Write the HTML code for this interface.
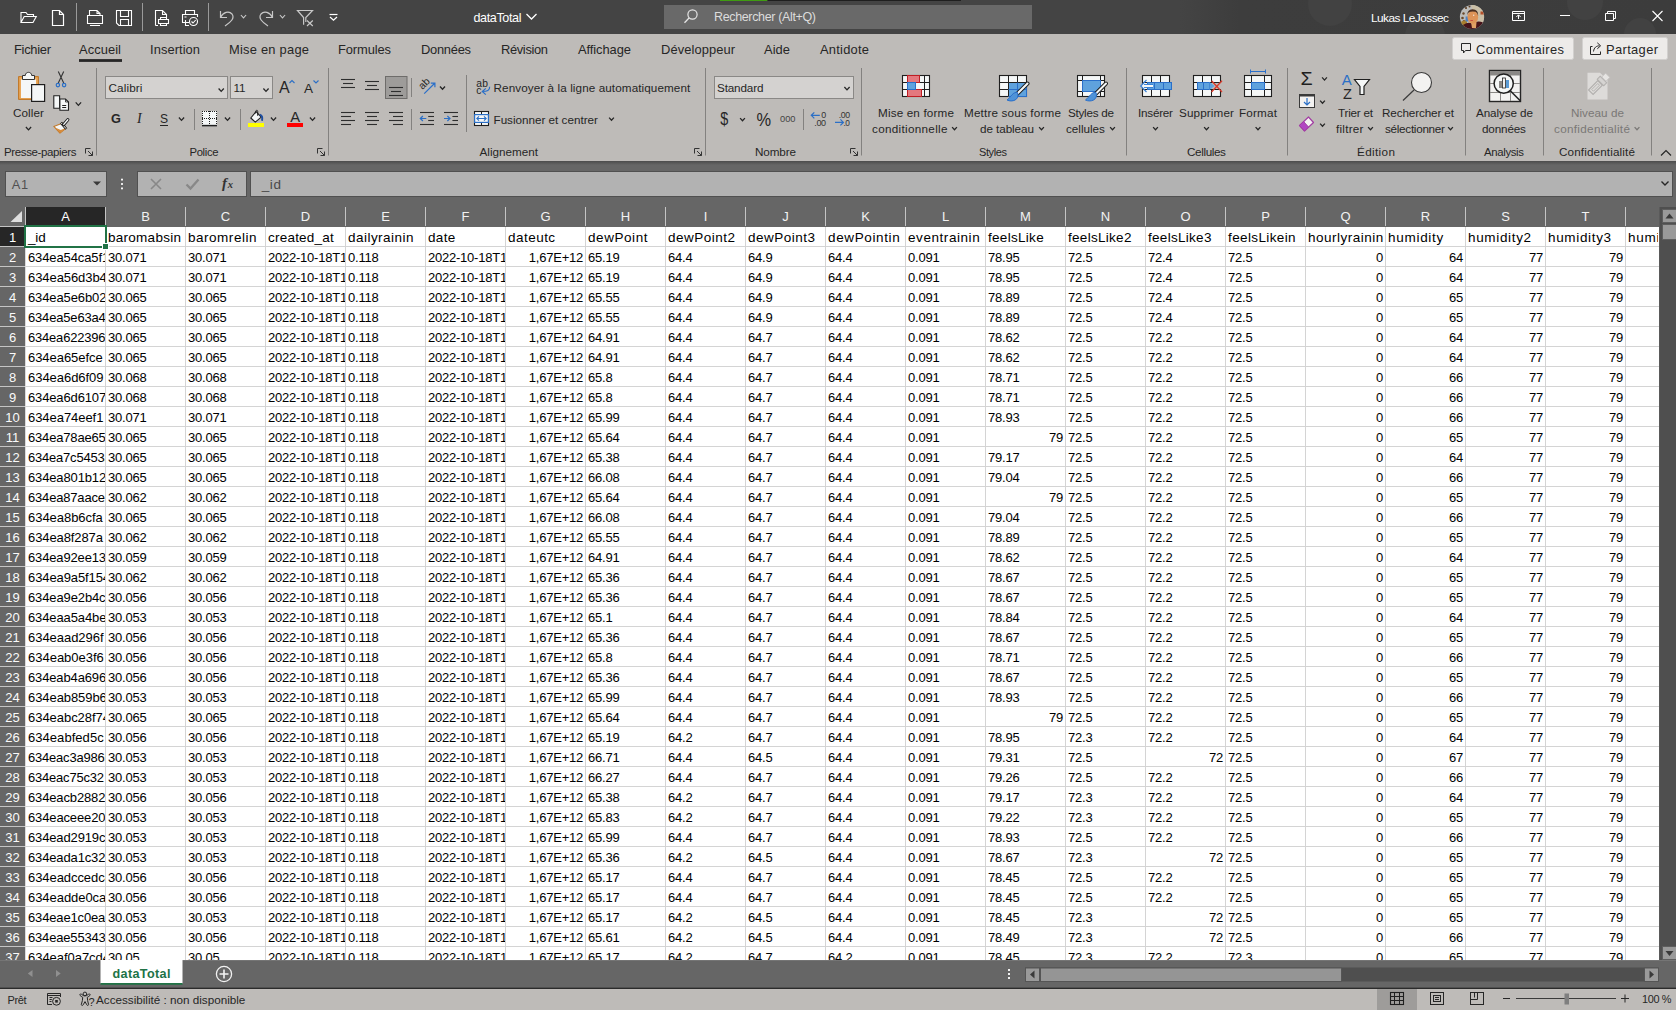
<!DOCTYPE html>
<html lang="fr"><head><meta charset="utf-8"><title>dataTotal - Excel</title>
<style>
*{box-sizing:border-box;margin:0;padding:0}
html,body{width:1676px;height:1010px;overflow:hidden;background:#666666}
body{font-family:"Liberation Sans", sans-serif;position:relative}
#app{position:absolute;left:0;top:0;width:1676px;height:1010px;overflow:hidden;background:#666666}
#sheet{position:absolute;left:0;top:207px;width:1659px;height:753px;overflow:hidden;background:#666666}
#cells{position:absolute;left:26px;top:20px;width:1633px;height:733px;background-color:#fff;
 background-image:linear-gradient(to right,transparent 79px,#d4d4d4 79px),linear-gradient(to bottom,transparent 19px,#d4d4d4 19px);
 background-size:80px 20px,80px 20px;}
#g{position:absolute;left:0;top:-207px;width:1676px;height:1010px}
.c{position:absolute;height:19px;line-height:19px;font-size:13px;letter-spacing:-0.23px;color:#000;white-space:nowrap;overflow:hidden;padding:1px 2px 0 2px;background:#fff}
.c.n{text-align:right;padding-right:2px}
.c.h{font-size:13.5px}
.c.i{letter-spacing:0.1px}
.ch{position:absolute;top:207px;height:19px;line-height:20px;font-size:13px;color:#f2f2f2;text-align:center;background:#666666}
.ch.sel{background:#262626;color:#fff}
.chs{position:absolute;top:207px;width:1px;height:19px;background:#c4c4c4}
.rh{position:absolute;left:0;width:25px;height:19px;line-height:22px;font-size:13px;color:#fafafa;text-align:center;background:#666666;border-bottom:0}
.rh::after{content:"";position:absolute;left:0;top:19px;width:25px;height:1px;background:#c4c4c4}
.rh.sel{background:#262626;color:#fff}
#vl{position:absolute;left:25px;top:227px;width:1px;height:733px;background:#dcdcdc}
#selbox{position:absolute;left:24px;top:225px;width:83px;height:23px;border:2px solid #217346}
#selh{position:absolute;left:102px;top:243px;width:5px;height:5px;background:#217346;border:1px solid #fff;box-sizing:content-box}
svg#ui{position:absolute;left:0;top:0;width:1676px;height:1010px;font-family:"Liberation Sans", sans-serif}
</style></head><body><div id="app">
<div id="sheet"><div id="cells"></div><div id="g">
<div class="ch sel" style="left:26px;width:79px">A</div>
<div class="chs" style="left:105px"></div>
<div class="ch" style="left:106px;width:79px">B</div>
<div class="chs" style="left:185px"></div>
<div class="ch" style="left:186px;width:79px">C</div>
<div class="chs" style="left:265px"></div>
<div class="ch" style="left:266px;width:79px">D</div>
<div class="chs" style="left:345px"></div>
<div class="ch" style="left:346px;width:79px">E</div>
<div class="chs" style="left:425px"></div>
<div class="ch" style="left:426px;width:79px">F</div>
<div class="chs" style="left:505px"></div>
<div class="ch" style="left:506px;width:79px">G</div>
<div class="chs" style="left:585px"></div>
<div class="ch" style="left:586px;width:79px">H</div>
<div class="chs" style="left:665px"></div>
<div class="ch" style="left:666px;width:79px">I</div>
<div class="chs" style="left:745px"></div>
<div class="ch" style="left:746px;width:79px">J</div>
<div class="chs" style="left:825px"></div>
<div class="ch" style="left:826px;width:79px">K</div>
<div class="chs" style="left:905px"></div>
<div class="ch" style="left:906px;width:79px">L</div>
<div class="chs" style="left:985px"></div>
<div class="ch" style="left:986px;width:79px">M</div>
<div class="chs" style="left:1065px"></div>
<div class="ch" style="left:1066px;width:79px">N</div>
<div class="chs" style="left:1145px"></div>
<div class="ch" style="left:1146px;width:79px">O</div>
<div class="chs" style="left:1225px"></div>
<div class="ch" style="left:1226px;width:79px">P</div>
<div class="chs" style="left:1305px"></div>
<div class="ch" style="left:1306px;width:79px">Q</div>
<div class="chs" style="left:1385px"></div>
<div class="ch" style="left:1386px;width:79px">R</div>
<div class="chs" style="left:1465px"></div>
<div class="ch" style="left:1466px;width:79px">S</div>
<div class="chs" style="left:1545px"></div>
<div class="ch" style="left:1546px;width:79px">T</div>
<div class="chs" style="left:1625px"></div>
<div class="ch" style="left:1626px;width:32px"></div>
<div class="chs" style="left:25px"></div>
<div class="rh sel" style="top:227px">1</div>
<div class="c h" style="left:26px;top:227px;width:79px;letter-spacing:-0.17px">_id</div>
<div class="c h" style="left:106px;top:227px;width:79px;letter-spacing:0.27px">baromabsin</div>
<div class="c h" style="left:186px;top:227px;width:79px;letter-spacing:0.52px">baromrelin</div>
<div class="c h" style="left:266px;top:227px;width:79px;letter-spacing:0.22px">created_at</div>
<div class="c h" style="left:346px;top:227px;width:79px;letter-spacing:0.47px">dailyrainin</div>
<div class="c h" style="left:426px;top:227px;width:79px;letter-spacing:0.31px">date</div>
<div class="c h" style="left:506px;top:227px;width:79px;letter-spacing:0.47px">dateutc</div>
<div class="c h" style="left:586px;top:227px;width:79px;letter-spacing:0.56px">dewPoint</div>
<div class="c h" style="left:666px;top:227px;width:79px;letter-spacing:0.51px">dewPoint2</div>
<div class="c h" style="left:746px;top:227px;width:79px;letter-spacing:0.51px">dewPoint3</div>
<div class="c h" style="left:826px;top:227px;width:79px;letter-spacing:0.63px">dewPointin</div>
<div class="c h" style="left:906px;top:227px;width:79px;letter-spacing:0.56px">eventrainin</div>
<div class="c h" style="left:986px;top:227px;width:79px;letter-spacing:0.30px">feelsLike</div>
<div class="c h" style="left:1066px;top:227px;width:79px;letter-spacing:0.29px">feelsLike2</div>
<div class="c h" style="left:1146px;top:227px;width:79px;letter-spacing:0.29px">feelsLike3</div>
<div class="c h" style="left:1226px;top:227px;width:79px;letter-spacing:0.38px">feelsLikein</div>
<div class="c h" style="left:1306px;top:227px;width:79px;letter-spacing:0.49px">hourlyrainin</div>
<div class="c h" style="left:1386px;top:227px;width:79px;letter-spacing:0.72px">humidity</div>
<div class="c h" style="left:1466px;top:227px;width:79px;letter-spacing:0.66px">humidity2</div>
<div class="c h" style="left:1546px;top:227px;width:79px;letter-spacing:0.66px">humidity3</div>
<div class="c h" style="left:1626px;top:227px;width:32px;letter-spacing:0.72px">humidityin</div>
<div class="rh" style="top:247px">2</div>
<div class="c i" style="left:26px;top:247px;width:79px;letter-spacing:-0.11px">634ea54ca5f1c</div>
<div class="c" style="left:106px;top:247px;width:79px">30.071</div>
<div class="c" style="left:186px;top:247px;width:79px">30.071</div>
<div class="c" style="left:266px;top:247px;width:79px">2022-10-18T12</div>
<div class="c" style="left:346px;top:247px;width:79px">0.118</div>
<div class="c" style="left:426px;top:247px;width:79px">2022-10-18T12</div>
<div class="c n" style="left:506px;top:247px;width:79px">1,67E+12</div>
<div class="c" style="left:586px;top:247px;width:79px">65.19</div>
<div class="c" style="left:666px;top:247px;width:79px">64.4</div>
<div class="c" style="left:746px;top:247px;width:79px">64.9</div>
<div class="c" style="left:826px;top:247px;width:79px">64.4</div>
<div class="c" style="left:906px;top:247px;width:79px">0.091</div>
<div class="c" style="left:986px;top:247px;width:79px">78.95</div>
<div class="c" style="left:1066px;top:247px;width:79px">72.5</div>
<div class="c" style="left:1146px;top:247px;width:79px">72.4</div>
<div class="c" style="left:1226px;top:247px;width:79px">72.5</div>
<div class="c n" style="left:1306px;top:247px;width:79px">0</div>
<div class="c n" style="left:1386px;top:247px;width:79px">64</div>
<div class="c n" style="left:1466px;top:247px;width:79px">77</div>
<div class="c n" style="left:1546px;top:247px;width:79px">79</div>
<div class="rh" style="top:267px">3</div>
<div class="c i" style="left:26px;top:267px;width:79px;letter-spacing:-0.07px">634ea56d3b4e</div>
<div class="c" style="left:106px;top:267px;width:79px">30.071</div>
<div class="c" style="left:186px;top:267px;width:79px">30.071</div>
<div class="c" style="left:266px;top:267px;width:79px">2022-10-18T12</div>
<div class="c" style="left:346px;top:267px;width:79px">0.118</div>
<div class="c" style="left:426px;top:267px;width:79px">2022-10-18T12</div>
<div class="c n" style="left:506px;top:267px;width:79px">1,67E+12</div>
<div class="c" style="left:586px;top:267px;width:79px">65.19</div>
<div class="c" style="left:666px;top:267px;width:79px">64.4</div>
<div class="c" style="left:746px;top:267px;width:79px">64.9</div>
<div class="c" style="left:826px;top:267px;width:79px">64.4</div>
<div class="c" style="left:906px;top:267px;width:79px">0.091</div>
<div class="c" style="left:986px;top:267px;width:79px">78.95</div>
<div class="c" style="left:1066px;top:267px;width:79px">72.5</div>
<div class="c" style="left:1146px;top:267px;width:79px">72.4</div>
<div class="c" style="left:1226px;top:267px;width:79px">72.5</div>
<div class="c n" style="left:1306px;top:267px;width:79px">0</div>
<div class="c n" style="left:1386px;top:267px;width:79px">64</div>
<div class="c n" style="left:1466px;top:267px;width:79px">77</div>
<div class="c n" style="left:1546px;top:267px;width:79px">79</div>
<div class="rh" style="top:287px">4</div>
<div class="c i" style="left:26px;top:287px;width:79px;letter-spacing:-0.11px">634ea5e6b02a</div>
<div class="c" style="left:106px;top:287px;width:79px">30.065</div>
<div class="c" style="left:186px;top:287px;width:79px">30.065</div>
<div class="c" style="left:266px;top:287px;width:79px">2022-10-18T12</div>
<div class="c" style="left:346px;top:287px;width:79px">0.118</div>
<div class="c" style="left:426px;top:287px;width:79px">2022-10-18T12</div>
<div class="c n" style="left:506px;top:287px;width:79px">1,67E+12</div>
<div class="c" style="left:586px;top:287px;width:79px">65.55</div>
<div class="c" style="left:666px;top:287px;width:79px">64.4</div>
<div class="c" style="left:746px;top:287px;width:79px">64.9</div>
<div class="c" style="left:826px;top:287px;width:79px">64.4</div>
<div class="c" style="left:906px;top:287px;width:79px">0.091</div>
<div class="c" style="left:986px;top:287px;width:79px">78.89</div>
<div class="c" style="left:1066px;top:287px;width:79px">72.5</div>
<div class="c" style="left:1146px;top:287px;width:79px">72.4</div>
<div class="c" style="left:1226px;top:287px;width:79px">72.5</div>
<div class="c n" style="left:1306px;top:287px;width:79px">0</div>
<div class="c n" style="left:1386px;top:287px;width:79px">65</div>
<div class="c n" style="left:1466px;top:287px;width:79px">77</div>
<div class="c n" style="left:1546px;top:287px;width:79px">79</div>
<div class="rh" style="top:307px">5</div>
<div class="c i" style="left:26px;top:307px;width:79px;letter-spacing:-0.17px">634ea5e63a4c</div>
<div class="c" style="left:106px;top:307px;width:79px">30.065</div>
<div class="c" style="left:186px;top:307px;width:79px">30.065</div>
<div class="c" style="left:266px;top:307px;width:79px">2022-10-18T12</div>
<div class="c" style="left:346px;top:307px;width:79px">0.118</div>
<div class="c" style="left:426px;top:307px;width:79px">2022-10-18T12</div>
<div class="c n" style="left:506px;top:307px;width:79px">1,67E+12</div>
<div class="c" style="left:586px;top:307px;width:79px">65.55</div>
<div class="c" style="left:666px;top:307px;width:79px">64.4</div>
<div class="c" style="left:746px;top:307px;width:79px">64.9</div>
<div class="c" style="left:826px;top:307px;width:79px">64.4</div>
<div class="c" style="left:906px;top:307px;width:79px">0.091</div>
<div class="c" style="left:986px;top:307px;width:79px">78.89</div>
<div class="c" style="left:1066px;top:307px;width:79px">72.5</div>
<div class="c" style="left:1146px;top:307px;width:79px">72.4</div>
<div class="c" style="left:1226px;top:307px;width:79px">72.5</div>
<div class="c n" style="left:1306px;top:307px;width:79px">0</div>
<div class="c n" style="left:1386px;top:307px;width:79px">65</div>
<div class="c n" style="left:1466px;top:307px;width:79px">77</div>
<div class="c n" style="left:1546px;top:307px;width:79px">79</div>
<div class="rh" style="top:327px">6</div>
<div class="c i" style="left:26px;top:327px;width:79px;letter-spacing:-0.20px">634ea622396d</div>
<div class="c" style="left:106px;top:327px;width:79px">30.065</div>
<div class="c" style="left:186px;top:327px;width:79px">30.065</div>
<div class="c" style="left:266px;top:327px;width:79px">2022-10-18T12</div>
<div class="c" style="left:346px;top:327px;width:79px">0.118</div>
<div class="c" style="left:426px;top:327px;width:79px">2022-10-18T12</div>
<div class="c n" style="left:506px;top:327px;width:79px">1,67E+12</div>
<div class="c" style="left:586px;top:327px;width:79px">64.91</div>
<div class="c" style="left:666px;top:327px;width:79px">64.4</div>
<div class="c" style="left:746px;top:327px;width:79px">64.7</div>
<div class="c" style="left:826px;top:327px;width:79px">64.4</div>
<div class="c" style="left:906px;top:327px;width:79px">0.091</div>
<div class="c" style="left:986px;top:327px;width:79px">78.62</div>
<div class="c" style="left:1066px;top:327px;width:79px">72.5</div>
<div class="c" style="left:1146px;top:327px;width:79px">72.2</div>
<div class="c" style="left:1226px;top:327px;width:79px">72.5</div>
<div class="c n" style="left:1306px;top:327px;width:79px">0</div>
<div class="c n" style="left:1386px;top:327px;width:79px">64</div>
<div class="c n" style="left:1466px;top:327px;width:79px">77</div>
<div class="c n" style="left:1546px;top:327px;width:79px">79</div>
<div class="rh" style="top:347px">7</div>
<div class="c i" style="left:26px;top:347px;width:79px;letter-spacing:-0.05px">634ea65efce</div>
<div class="c" style="left:106px;top:347px;width:79px">30.065</div>
<div class="c" style="left:186px;top:347px;width:79px">30.065</div>
<div class="c" style="left:266px;top:347px;width:79px">2022-10-18T12</div>
<div class="c" style="left:346px;top:347px;width:79px">0.118</div>
<div class="c" style="left:426px;top:347px;width:79px">2022-10-18T12</div>
<div class="c n" style="left:506px;top:347px;width:79px">1,67E+12</div>
<div class="c" style="left:586px;top:347px;width:79px">64.91</div>
<div class="c" style="left:666px;top:347px;width:79px">64.4</div>
<div class="c" style="left:746px;top:347px;width:79px">64.7</div>
<div class="c" style="left:826px;top:347px;width:79px">64.4</div>
<div class="c" style="left:906px;top:347px;width:79px">0.091</div>
<div class="c" style="left:986px;top:347px;width:79px">78.62</div>
<div class="c" style="left:1066px;top:347px;width:79px">72.5</div>
<div class="c" style="left:1146px;top:347px;width:79px">72.2</div>
<div class="c" style="left:1226px;top:347px;width:79px">72.5</div>
<div class="c n" style="left:1306px;top:347px;width:79px">0</div>
<div class="c n" style="left:1386px;top:347px;width:79px">64</div>
<div class="c n" style="left:1466px;top:347px;width:79px">77</div>
<div class="c n" style="left:1546px;top:347px;width:79px">79</div>
<div class="rh" style="top:367px">8</div>
<div class="c i" style="left:26px;top:367px;width:79px;letter-spacing:-0.04px">634ea6d6f09</div>
<div class="c" style="left:106px;top:367px;width:79px">30.068</div>
<div class="c" style="left:186px;top:367px;width:79px">30.068</div>
<div class="c" style="left:266px;top:367px;width:79px">2022-10-18T12</div>
<div class="c" style="left:346px;top:367px;width:79px">0.118</div>
<div class="c" style="left:426px;top:367px;width:79px">2022-10-18T12</div>
<div class="c n" style="left:506px;top:367px;width:79px">1,67E+12</div>
<div class="c" style="left:586px;top:367px;width:79px">65.8</div>
<div class="c" style="left:666px;top:367px;width:79px">64.4</div>
<div class="c" style="left:746px;top:367px;width:79px">64.7</div>
<div class="c" style="left:826px;top:367px;width:79px">64.4</div>
<div class="c" style="left:906px;top:367px;width:79px">0.091</div>
<div class="c" style="left:986px;top:367px;width:79px">78.71</div>
<div class="c" style="left:1066px;top:367px;width:79px">72.5</div>
<div class="c" style="left:1146px;top:367px;width:79px">72.2</div>
<div class="c" style="left:1226px;top:367px;width:79px">72.5</div>
<div class="c n" style="left:1306px;top:367px;width:79px">0</div>
<div class="c n" style="left:1386px;top:367px;width:79px">66</div>
<div class="c n" style="left:1466px;top:367px;width:79px">77</div>
<div class="c n" style="left:1546px;top:367px;width:79px">79</div>
<div class="rh" style="top:387px">9</div>
<div class="c i" style="left:26px;top:387px;width:79px;letter-spacing:-0.14px">634ea6d61077</div>
<div class="c" style="left:106px;top:387px;width:79px">30.068</div>
<div class="c" style="left:186px;top:387px;width:79px">30.068</div>
<div class="c" style="left:266px;top:387px;width:79px">2022-10-18T12</div>
<div class="c" style="left:346px;top:387px;width:79px">0.118</div>
<div class="c" style="left:426px;top:387px;width:79px">2022-10-18T12</div>
<div class="c n" style="left:506px;top:387px;width:79px">1,67E+12</div>
<div class="c" style="left:586px;top:387px;width:79px">65.8</div>
<div class="c" style="left:666px;top:387px;width:79px">64.4</div>
<div class="c" style="left:746px;top:387px;width:79px">64.7</div>
<div class="c" style="left:826px;top:387px;width:79px">64.4</div>
<div class="c" style="left:906px;top:387px;width:79px">0.091</div>
<div class="c" style="left:986px;top:387px;width:79px">78.71</div>
<div class="c" style="left:1066px;top:387px;width:79px">72.5</div>
<div class="c" style="left:1146px;top:387px;width:79px">72.2</div>
<div class="c" style="left:1226px;top:387px;width:79px">72.5</div>
<div class="c n" style="left:1306px;top:387px;width:79px">0</div>
<div class="c n" style="left:1386px;top:387px;width:79px">66</div>
<div class="c n" style="left:1466px;top:387px;width:79px">77</div>
<div class="c n" style="left:1546px;top:387px;width:79px">79</div>
<div class="rh" style="top:407px">10</div>
<div class="c i" style="left:26px;top:407px;width:79px;letter-spacing:-0.05px">634ea74eef1</div>
<div class="c" style="left:106px;top:407px;width:79px">30.071</div>
<div class="c" style="left:186px;top:407px;width:79px">30.071</div>
<div class="c" style="left:266px;top:407px;width:79px">2022-10-18T12</div>
<div class="c" style="left:346px;top:407px;width:79px">0.118</div>
<div class="c" style="left:426px;top:407px;width:79px">2022-10-18T12</div>
<div class="c n" style="left:506px;top:407px;width:79px">1,67E+12</div>
<div class="c" style="left:586px;top:407px;width:79px">65.99</div>
<div class="c" style="left:666px;top:407px;width:79px">64.4</div>
<div class="c" style="left:746px;top:407px;width:79px">64.7</div>
<div class="c" style="left:826px;top:407px;width:79px">64.4</div>
<div class="c" style="left:906px;top:407px;width:79px">0.091</div>
<div class="c" style="left:986px;top:407px;width:79px">78.93</div>
<div class="c" style="left:1066px;top:407px;width:79px">72.5</div>
<div class="c" style="left:1146px;top:407px;width:79px">72.2</div>
<div class="c" style="left:1226px;top:407px;width:79px">72.5</div>
<div class="c n" style="left:1306px;top:407px;width:79px">0</div>
<div class="c n" style="left:1386px;top:407px;width:79px">66</div>
<div class="c n" style="left:1466px;top:407px;width:79px">77</div>
<div class="c n" style="left:1546px;top:407px;width:79px">79</div>
<div class="rh" style="top:427px">11</div>
<div class="c i" style="left:26px;top:427px;width:79px;letter-spacing:-0.17px">634ea78ae655</div>
<div class="c" style="left:106px;top:427px;width:79px">30.065</div>
<div class="c" style="left:186px;top:427px;width:79px">30.065</div>
<div class="c" style="left:266px;top:427px;width:79px">2022-10-18T12</div>
<div class="c" style="left:346px;top:427px;width:79px">0.118</div>
<div class="c" style="left:426px;top:427px;width:79px">2022-10-18T12</div>
<div class="c n" style="left:506px;top:427px;width:79px">1,67E+12</div>
<div class="c" style="left:586px;top:427px;width:79px">65.64</div>
<div class="c" style="left:666px;top:427px;width:79px">64.4</div>
<div class="c" style="left:746px;top:427px;width:79px">64.7</div>
<div class="c" style="left:826px;top:427px;width:79px">64.4</div>
<div class="c" style="left:906px;top:427px;width:79px">0.091</div>
<div class="c n" style="left:986px;top:427px;width:79px">79</div>
<div class="c" style="left:1066px;top:427px;width:79px">72.5</div>
<div class="c" style="left:1146px;top:427px;width:79px">72.2</div>
<div class="c" style="left:1226px;top:427px;width:79px">72.5</div>
<div class="c n" style="left:1306px;top:427px;width:79px">0</div>
<div class="c n" style="left:1386px;top:427px;width:79px">65</div>
<div class="c n" style="left:1466px;top:427px;width:79px">77</div>
<div class="c n" style="left:1546px;top:427px;width:79px">79</div>
<div class="rh" style="top:447px">12</div>
<div class="c i" style="left:26px;top:447px;width:79px;letter-spacing:-0.21px">634ea7c5453a</div>
<div class="c" style="left:106px;top:447px;width:79px">30.065</div>
<div class="c" style="left:186px;top:447px;width:79px">30.065</div>
<div class="c" style="left:266px;top:447px;width:79px">2022-10-18T12</div>
<div class="c" style="left:346px;top:447px;width:79px">0.118</div>
<div class="c" style="left:426px;top:447px;width:79px">2022-10-18T12</div>
<div class="c n" style="left:506px;top:447px;width:79px">1,67E+12</div>
<div class="c" style="left:586px;top:447px;width:79px">65.38</div>
<div class="c" style="left:666px;top:447px;width:79px">64.4</div>
<div class="c" style="left:746px;top:447px;width:79px">64.7</div>
<div class="c" style="left:826px;top:447px;width:79px">64.4</div>
<div class="c" style="left:906px;top:447px;width:79px">0.091</div>
<div class="c" style="left:986px;top:447px;width:79px">79.17</div>
<div class="c" style="left:1066px;top:447px;width:79px">72.5</div>
<div class="c" style="left:1146px;top:447px;width:79px">72.2</div>
<div class="c" style="left:1226px;top:447px;width:79px">72.5</div>
<div class="c n" style="left:1306px;top:447px;width:79px">0</div>
<div class="c n" style="left:1386px;top:447px;width:79px">64</div>
<div class="c n" style="left:1466px;top:447px;width:79px">77</div>
<div class="c n" style="left:1546px;top:447px;width:79px">79</div>
<div class="rh" style="top:467px">13</div>
<div class="c i" style="left:26px;top:467px;width:79px;letter-spacing:-0.14px">634ea801b12c</div>
<div class="c" style="left:106px;top:467px;width:79px">30.065</div>
<div class="c" style="left:186px;top:467px;width:79px">30.065</div>
<div class="c" style="left:266px;top:467px;width:79px">2022-10-18T12</div>
<div class="c" style="left:346px;top:467px;width:79px">0.118</div>
<div class="c" style="left:426px;top:467px;width:79px">2022-10-18T12</div>
<div class="c n" style="left:506px;top:467px;width:79px">1,67E+12</div>
<div class="c" style="left:586px;top:467px;width:79px">66.08</div>
<div class="c" style="left:666px;top:467px;width:79px">64.4</div>
<div class="c" style="left:746px;top:467px;width:79px">64.7</div>
<div class="c" style="left:826px;top:467px;width:79px">64.4</div>
<div class="c" style="left:906px;top:467px;width:79px">0.091</div>
<div class="c" style="left:986px;top:467px;width:79px">79.04</div>
<div class="c" style="left:1066px;top:467px;width:79px">72.5</div>
<div class="c" style="left:1146px;top:467px;width:79px">72.2</div>
<div class="c" style="left:1226px;top:467px;width:79px">72.5</div>
<div class="c n" style="left:1306px;top:467px;width:79px">0</div>
<div class="c n" style="left:1386px;top:467px;width:79px">66</div>
<div class="c n" style="left:1466px;top:467px;width:79px">77</div>
<div class="c n" style="left:1546px;top:467px;width:79px">79</div>
<div class="rh" style="top:487px">14</div>
<div class="c i" style="left:26px;top:487px;width:79px;letter-spacing:-0.18px">634ea87aace2</div>
<div class="c" style="left:106px;top:487px;width:79px">30.062</div>
<div class="c" style="left:186px;top:487px;width:79px">30.062</div>
<div class="c" style="left:266px;top:487px;width:79px">2022-10-18T12</div>
<div class="c" style="left:346px;top:487px;width:79px">0.118</div>
<div class="c" style="left:426px;top:487px;width:79px">2022-10-18T12</div>
<div class="c n" style="left:506px;top:487px;width:79px">1,67E+12</div>
<div class="c" style="left:586px;top:487px;width:79px">65.64</div>
<div class="c" style="left:666px;top:487px;width:79px">64.4</div>
<div class="c" style="left:746px;top:487px;width:79px">64.7</div>
<div class="c" style="left:826px;top:487px;width:79px">64.4</div>
<div class="c" style="left:906px;top:487px;width:79px">0.091</div>
<div class="c n" style="left:986px;top:487px;width:79px">79</div>
<div class="c" style="left:1066px;top:487px;width:79px">72.5</div>
<div class="c" style="left:1146px;top:487px;width:79px">72.2</div>
<div class="c" style="left:1226px;top:487px;width:79px">72.5</div>
<div class="c n" style="left:1306px;top:487px;width:79px">0</div>
<div class="c n" style="left:1386px;top:487px;width:79px">65</div>
<div class="c n" style="left:1466px;top:487px;width:79px">77</div>
<div class="c n" style="left:1546px;top:487px;width:79px">79</div>
<div class="rh" style="top:507px">15</div>
<div class="c i" style="left:26px;top:507px;width:79px;letter-spacing:-0.04px">634ea8b6cfa</div>
<div class="c" style="left:106px;top:507px;width:79px">30.065</div>
<div class="c" style="left:186px;top:507px;width:79px">30.065</div>
<div class="c" style="left:266px;top:507px;width:79px">2022-10-18T12</div>
<div class="c" style="left:346px;top:507px;width:79px">0.118</div>
<div class="c" style="left:426px;top:507px;width:79px">2022-10-18T12</div>
<div class="c n" style="left:506px;top:507px;width:79px">1,67E+12</div>
<div class="c" style="left:586px;top:507px;width:79px">66.08</div>
<div class="c" style="left:666px;top:507px;width:79px">64.4</div>
<div class="c" style="left:746px;top:507px;width:79px">64.7</div>
<div class="c" style="left:826px;top:507px;width:79px">64.4</div>
<div class="c" style="left:906px;top:507px;width:79px">0.091</div>
<div class="c" style="left:986px;top:507px;width:79px">79.04</div>
<div class="c" style="left:1066px;top:507px;width:79px">72.5</div>
<div class="c" style="left:1146px;top:507px;width:79px">72.2</div>
<div class="c" style="left:1226px;top:507px;width:79px">72.5</div>
<div class="c n" style="left:1306px;top:507px;width:79px">0</div>
<div class="c n" style="left:1386px;top:507px;width:79px">66</div>
<div class="c n" style="left:1466px;top:507px;width:79px">77</div>
<div class="c n" style="left:1546px;top:507px;width:79px">79</div>
<div class="rh" style="top:527px">16</div>
<div class="c i" style="left:26px;top:527px;width:79px;letter-spacing:-0.10px">634ea8f287a</div>
<div class="c" style="left:106px;top:527px;width:79px">30.062</div>
<div class="c" style="left:186px;top:527px;width:79px">30.062</div>
<div class="c" style="left:266px;top:527px;width:79px">2022-10-18T12</div>
<div class="c" style="left:346px;top:527px;width:79px">0.118</div>
<div class="c" style="left:426px;top:527px;width:79px">2022-10-18T12</div>
<div class="c n" style="left:506px;top:527px;width:79px">1,67E+12</div>
<div class="c" style="left:586px;top:527px;width:79px">65.55</div>
<div class="c" style="left:666px;top:527px;width:79px">64.4</div>
<div class="c" style="left:746px;top:527px;width:79px">64.7</div>
<div class="c" style="left:826px;top:527px;width:79px">64.4</div>
<div class="c" style="left:906px;top:527px;width:79px">0.091</div>
<div class="c" style="left:986px;top:527px;width:79px">78.89</div>
<div class="c" style="left:1066px;top:527px;width:79px">72.5</div>
<div class="c" style="left:1146px;top:527px;width:79px">72.2</div>
<div class="c" style="left:1226px;top:527px;width:79px">72.5</div>
<div class="c n" style="left:1306px;top:527px;width:79px">0</div>
<div class="c n" style="left:1386px;top:527px;width:79px">65</div>
<div class="c n" style="left:1466px;top:527px;width:79px">77</div>
<div class="c n" style="left:1546px;top:527px;width:79px">79</div>
<div class="rh" style="top:547px">17</div>
<div class="c i" style="left:26px;top:547px;width:79px;letter-spacing:-0.15px">634ea92ee131</div>
<div class="c" style="left:106px;top:547px;width:79px">30.059</div>
<div class="c" style="left:186px;top:547px;width:79px">30.059</div>
<div class="c" style="left:266px;top:547px;width:79px">2022-10-18T12</div>
<div class="c" style="left:346px;top:547px;width:79px">0.118</div>
<div class="c" style="left:426px;top:547px;width:79px">2022-10-18T12</div>
<div class="c n" style="left:506px;top:547px;width:79px">1,67E+12</div>
<div class="c" style="left:586px;top:547px;width:79px">64.91</div>
<div class="c" style="left:666px;top:547px;width:79px">64.4</div>
<div class="c" style="left:746px;top:547px;width:79px">64.7</div>
<div class="c" style="left:826px;top:547px;width:79px">64.4</div>
<div class="c" style="left:906px;top:547px;width:79px">0.091</div>
<div class="c" style="left:986px;top:547px;width:79px">78.62</div>
<div class="c" style="left:1066px;top:547px;width:79px">72.5</div>
<div class="c" style="left:1146px;top:547px;width:79px">72.2</div>
<div class="c" style="left:1226px;top:547px;width:79px">72.5</div>
<div class="c n" style="left:1306px;top:547px;width:79px">0</div>
<div class="c n" style="left:1386px;top:547px;width:79px">64</div>
<div class="c n" style="left:1466px;top:547px;width:79px">77</div>
<div class="c n" style="left:1546px;top:547px;width:79px">79</div>
<div class="rh" style="top:567px">18</div>
<div class="c i" style="left:26px;top:567px;width:79px;letter-spacing:-0.10px">634ea9a5f154</div>
<div class="c" style="left:106px;top:567px;width:79px">30.062</div>
<div class="c" style="left:186px;top:567px;width:79px">30.062</div>
<div class="c" style="left:266px;top:567px;width:79px">2022-10-18T12</div>
<div class="c" style="left:346px;top:567px;width:79px">0.118</div>
<div class="c" style="left:426px;top:567px;width:79px">2022-10-18T12</div>
<div class="c n" style="left:506px;top:567px;width:79px">1,67E+12</div>
<div class="c" style="left:586px;top:567px;width:79px">65.36</div>
<div class="c" style="left:666px;top:567px;width:79px">64.4</div>
<div class="c" style="left:746px;top:567px;width:79px">64.7</div>
<div class="c" style="left:826px;top:567px;width:79px">64.4</div>
<div class="c" style="left:906px;top:567px;width:79px">0.091</div>
<div class="c" style="left:986px;top:567px;width:79px">78.67</div>
<div class="c" style="left:1066px;top:567px;width:79px">72.5</div>
<div class="c" style="left:1146px;top:567px;width:79px">72.2</div>
<div class="c" style="left:1226px;top:567px;width:79px">72.5</div>
<div class="c n" style="left:1306px;top:567px;width:79px">0</div>
<div class="c n" style="left:1386px;top:567px;width:79px">65</div>
<div class="c n" style="left:1466px;top:567px;width:79px">77</div>
<div class="c n" style="left:1546px;top:567px;width:79px">79</div>
<div class="rh" style="top:587px">19</div>
<div class="c i" style="left:26px;top:587px;width:79px;letter-spacing:-0.12px">634ea9e2b4c8</div>
<div class="c" style="left:106px;top:587px;width:79px">30.056</div>
<div class="c" style="left:186px;top:587px;width:79px">30.056</div>
<div class="c" style="left:266px;top:587px;width:79px">2022-10-18T12</div>
<div class="c" style="left:346px;top:587px;width:79px">0.118</div>
<div class="c" style="left:426px;top:587px;width:79px">2022-10-18T12</div>
<div class="c n" style="left:506px;top:587px;width:79px">1,67E+12</div>
<div class="c" style="left:586px;top:587px;width:79px">65.36</div>
<div class="c" style="left:666px;top:587px;width:79px">64.4</div>
<div class="c" style="left:746px;top:587px;width:79px">64.7</div>
<div class="c" style="left:826px;top:587px;width:79px">64.4</div>
<div class="c" style="left:906px;top:587px;width:79px">0.091</div>
<div class="c" style="left:986px;top:587px;width:79px">78.67</div>
<div class="c" style="left:1066px;top:587px;width:79px">72.5</div>
<div class="c" style="left:1146px;top:587px;width:79px">72.2</div>
<div class="c" style="left:1226px;top:587px;width:79px">72.5</div>
<div class="c n" style="left:1306px;top:587px;width:79px">0</div>
<div class="c n" style="left:1386px;top:587px;width:79px">65</div>
<div class="c n" style="left:1466px;top:587px;width:79px">77</div>
<div class="c n" style="left:1546px;top:587px;width:79px">79</div>
<div class="rh" style="top:607px">20</div>
<div class="c i" style="left:26px;top:607px;width:79px;letter-spacing:-0.11px">634eaa5a4be0</div>
<div class="c" style="left:106px;top:607px;width:79px">30.053</div>
<div class="c" style="left:186px;top:607px;width:79px">30.053</div>
<div class="c" style="left:266px;top:607px;width:79px">2022-10-18T12</div>
<div class="c" style="left:346px;top:607px;width:79px">0.118</div>
<div class="c" style="left:426px;top:607px;width:79px">2022-10-18T12</div>
<div class="c n" style="left:506px;top:607px;width:79px">1,67E+12</div>
<div class="c" style="left:586px;top:607px;width:79px">65.1</div>
<div class="c" style="left:666px;top:607px;width:79px">64.4</div>
<div class="c" style="left:746px;top:607px;width:79px">64.7</div>
<div class="c" style="left:826px;top:607px;width:79px">64.4</div>
<div class="c" style="left:906px;top:607px;width:79px">0.091</div>
<div class="c" style="left:986px;top:607px;width:79px">78.84</div>
<div class="c" style="left:1066px;top:607px;width:79px">72.5</div>
<div class="c" style="left:1146px;top:607px;width:79px">72.2</div>
<div class="c" style="left:1226px;top:607px;width:79px">72.5</div>
<div class="c n" style="left:1306px;top:607px;width:79px">0</div>
<div class="c n" style="left:1386px;top:607px;width:79px">64</div>
<div class="c n" style="left:1466px;top:607px;width:79px">77</div>
<div class="c n" style="left:1546px;top:607px;width:79px">79</div>
<div class="rh" style="top:627px">21</div>
<div class="c i" style="left:26px;top:627px;width:79px;letter-spacing:-0.04px">634eaad296f</div>
<div class="c" style="left:106px;top:627px;width:79px">30.056</div>
<div class="c" style="left:186px;top:627px;width:79px">30.056</div>
<div class="c" style="left:266px;top:627px;width:79px">2022-10-18T12</div>
<div class="c" style="left:346px;top:627px;width:79px">0.118</div>
<div class="c" style="left:426px;top:627px;width:79px">2022-10-18T12</div>
<div class="c n" style="left:506px;top:627px;width:79px">1,67E+12</div>
<div class="c" style="left:586px;top:627px;width:79px">65.36</div>
<div class="c" style="left:666px;top:627px;width:79px">64.4</div>
<div class="c" style="left:746px;top:627px;width:79px">64.7</div>
<div class="c" style="left:826px;top:627px;width:79px">64.4</div>
<div class="c" style="left:906px;top:627px;width:79px">0.091</div>
<div class="c" style="left:986px;top:627px;width:79px">78.67</div>
<div class="c" style="left:1066px;top:627px;width:79px">72.5</div>
<div class="c" style="left:1146px;top:627px;width:79px">72.2</div>
<div class="c" style="left:1226px;top:627px;width:79px">72.5</div>
<div class="c n" style="left:1306px;top:627px;width:79px">0</div>
<div class="c n" style="left:1386px;top:627px;width:79px">65</div>
<div class="c n" style="left:1466px;top:627px;width:79px">77</div>
<div class="c n" style="left:1546px;top:627px;width:79px">79</div>
<div class="rh" style="top:647px">22</div>
<div class="c i" style="left:26px;top:647px;width:79px;letter-spacing:-0.01px">634eab0e3f6</div>
<div class="c" style="left:106px;top:647px;width:79px">30.056</div>
<div class="c" style="left:186px;top:647px;width:79px">30.056</div>
<div class="c" style="left:266px;top:647px;width:79px">2022-10-18T12</div>
<div class="c" style="left:346px;top:647px;width:79px">0.118</div>
<div class="c" style="left:426px;top:647px;width:79px">2022-10-18T12</div>
<div class="c n" style="left:506px;top:647px;width:79px">1,67E+12</div>
<div class="c" style="left:586px;top:647px;width:79px">65.8</div>
<div class="c" style="left:666px;top:647px;width:79px">64.4</div>
<div class="c" style="left:746px;top:647px;width:79px">64.7</div>
<div class="c" style="left:826px;top:647px;width:79px">64.4</div>
<div class="c" style="left:906px;top:647px;width:79px">0.091</div>
<div class="c" style="left:986px;top:647px;width:79px">78.71</div>
<div class="c" style="left:1066px;top:647px;width:79px">72.5</div>
<div class="c" style="left:1146px;top:647px;width:79px">72.2</div>
<div class="c" style="left:1226px;top:647px;width:79px">72.5</div>
<div class="c n" style="left:1306px;top:647px;width:79px">0</div>
<div class="c n" style="left:1386px;top:647px;width:79px">66</div>
<div class="c n" style="left:1466px;top:647px;width:79px">77</div>
<div class="c n" style="left:1546px;top:647px;width:79px">79</div>
<div class="rh" style="top:667px">23</div>
<div class="c i" style="left:26px;top:667px;width:79px;letter-spacing:-0.14px">634eab4a6966</div>
<div class="c" style="left:106px;top:667px;width:79px">30.056</div>
<div class="c" style="left:186px;top:667px;width:79px">30.056</div>
<div class="c" style="left:266px;top:667px;width:79px">2022-10-18T12</div>
<div class="c" style="left:346px;top:667px;width:79px">0.118</div>
<div class="c" style="left:426px;top:667px;width:79px">2022-10-18T12</div>
<div class="c n" style="left:506px;top:667px;width:79px">1,67E+12</div>
<div class="c" style="left:586px;top:667px;width:79px">65.36</div>
<div class="c" style="left:666px;top:667px;width:79px">64.4</div>
<div class="c" style="left:746px;top:667px;width:79px">64.7</div>
<div class="c" style="left:826px;top:667px;width:79px">64.4</div>
<div class="c" style="left:906px;top:667px;width:79px">0.091</div>
<div class="c" style="left:986px;top:667px;width:79px">78.67</div>
<div class="c" style="left:1066px;top:667px;width:79px">72.5</div>
<div class="c" style="left:1146px;top:667px;width:79px">72.2</div>
<div class="c" style="left:1226px;top:667px;width:79px">72.5</div>
<div class="c n" style="left:1306px;top:667px;width:79px">0</div>
<div class="c n" style="left:1386px;top:667px;width:79px">65</div>
<div class="c n" style="left:1466px;top:667px;width:79px">77</div>
<div class="c n" style="left:1546px;top:667px;width:79px">79</div>
<div class="rh" style="top:687px">24</div>
<div class="c i" style="left:26px;top:687px;width:79px;letter-spacing:-0.07px">634eab859b69</div>
<div class="c" style="left:106px;top:687px;width:79px">30.053</div>
<div class="c" style="left:186px;top:687px;width:79px">30.053</div>
<div class="c" style="left:266px;top:687px;width:79px">2022-10-18T12</div>
<div class="c" style="left:346px;top:687px;width:79px">0.118</div>
<div class="c" style="left:426px;top:687px;width:79px">2022-10-18T12</div>
<div class="c n" style="left:506px;top:687px;width:79px">1,67E+12</div>
<div class="c" style="left:586px;top:687px;width:79px">65.99</div>
<div class="c" style="left:666px;top:687px;width:79px">64.4</div>
<div class="c" style="left:746px;top:687px;width:79px">64.7</div>
<div class="c" style="left:826px;top:687px;width:79px">64.4</div>
<div class="c" style="left:906px;top:687px;width:79px">0.091</div>
<div class="c" style="left:986px;top:687px;width:79px">78.93</div>
<div class="c" style="left:1066px;top:687px;width:79px">72.5</div>
<div class="c" style="left:1146px;top:687px;width:79px">72.2</div>
<div class="c" style="left:1226px;top:687px;width:79px">72.5</div>
<div class="c n" style="left:1306px;top:687px;width:79px">0</div>
<div class="c n" style="left:1386px;top:687px;width:79px">66</div>
<div class="c n" style="left:1466px;top:687px;width:79px">77</div>
<div class="c n" style="left:1546px;top:687px;width:79px">79</div>
<div class="rh" style="top:707px">25</div>
<div class="c i" style="left:26px;top:707px;width:79px;letter-spacing:-0.04px">634eabc28f74</div>
<div class="c" style="left:106px;top:707px;width:79px">30.065</div>
<div class="c" style="left:186px;top:707px;width:79px">30.065</div>
<div class="c" style="left:266px;top:707px;width:79px">2022-10-18T12</div>
<div class="c" style="left:346px;top:707px;width:79px">0.118</div>
<div class="c" style="left:426px;top:707px;width:79px">2022-10-18T12</div>
<div class="c n" style="left:506px;top:707px;width:79px">1,67E+12</div>
<div class="c" style="left:586px;top:707px;width:79px">65.64</div>
<div class="c" style="left:666px;top:707px;width:79px">64.4</div>
<div class="c" style="left:746px;top:707px;width:79px">64.7</div>
<div class="c" style="left:826px;top:707px;width:79px">64.4</div>
<div class="c" style="left:906px;top:707px;width:79px">0.091</div>
<div class="c n" style="left:986px;top:707px;width:79px">79</div>
<div class="c" style="left:1066px;top:707px;width:79px">72.5</div>
<div class="c" style="left:1146px;top:707px;width:79px">72.2</div>
<div class="c" style="left:1226px;top:707px;width:79px">72.5</div>
<div class="c n" style="left:1306px;top:707px;width:79px">0</div>
<div class="c n" style="left:1386px;top:707px;width:79px">65</div>
<div class="c n" style="left:1466px;top:707px;width:79px">77</div>
<div class="c n" style="left:1546px;top:707px;width:79px">79</div>
<div class="rh" style="top:727px">26</div>
<div class="c i" style="left:26px;top:727px;width:79px;letter-spacing:0.05px">634eabfed5c</div>
<div class="c" style="left:106px;top:727px;width:79px">30.056</div>
<div class="c" style="left:186px;top:727px;width:79px">30.056</div>
<div class="c" style="left:266px;top:727px;width:79px">2022-10-18T12</div>
<div class="c" style="left:346px;top:727px;width:79px">0.118</div>
<div class="c" style="left:426px;top:727px;width:79px">2022-10-18T12</div>
<div class="c n" style="left:506px;top:727px;width:79px">1,67E+12</div>
<div class="c" style="left:586px;top:727px;width:79px">65.19</div>
<div class="c" style="left:666px;top:727px;width:79px">64.2</div>
<div class="c" style="left:746px;top:727px;width:79px">64.7</div>
<div class="c" style="left:826px;top:727px;width:79px">64.4</div>
<div class="c" style="left:906px;top:727px;width:79px">0.091</div>
<div class="c" style="left:986px;top:727px;width:79px">78.95</div>
<div class="c" style="left:1066px;top:727px;width:79px">72.3</div>
<div class="c" style="left:1146px;top:727px;width:79px">72.2</div>
<div class="c" style="left:1226px;top:727px;width:79px">72.5</div>
<div class="c n" style="left:1306px;top:727px;width:79px">0</div>
<div class="c n" style="left:1386px;top:727px;width:79px">64</div>
<div class="c n" style="left:1466px;top:727px;width:79px">77</div>
<div class="c n" style="left:1546px;top:727px;width:79px">79</div>
<div class="rh" style="top:747px">27</div>
<div class="c i" style="left:26px;top:747px;width:79px;letter-spacing:-0.21px">634eac3a9865</div>
<div class="c" style="left:106px;top:747px;width:79px">30.053</div>
<div class="c" style="left:186px;top:747px;width:79px">30.053</div>
<div class="c" style="left:266px;top:747px;width:79px">2022-10-18T12</div>
<div class="c" style="left:346px;top:747px;width:79px">0.118</div>
<div class="c" style="left:426px;top:747px;width:79px">2022-10-18T12</div>
<div class="c n" style="left:506px;top:747px;width:79px">1,67E+12</div>
<div class="c" style="left:586px;top:747px;width:79px">66.71</div>
<div class="c" style="left:666px;top:747px;width:79px">64.4</div>
<div class="c" style="left:746px;top:747px;width:79px">64.5</div>
<div class="c" style="left:826px;top:747px;width:79px">64.4</div>
<div class="c" style="left:906px;top:747px;width:79px">0.091</div>
<div class="c" style="left:986px;top:747px;width:79px">79.31</div>
<div class="c" style="left:1066px;top:747px;width:79px">72.5</div>
<div class="c n" style="left:1146px;top:747px;width:79px">72</div>
<div class="c" style="left:1226px;top:747px;width:79px">72.5</div>
<div class="c n" style="left:1306px;top:747px;width:79px">0</div>
<div class="c n" style="left:1386px;top:747px;width:79px">67</div>
<div class="c n" style="left:1466px;top:747px;width:79px">77</div>
<div class="c n" style="left:1546px;top:747px;width:79px">79</div>
<div class="rh" style="top:767px">28</div>
<div class="c i" style="left:26px;top:767px;width:79px;letter-spacing:-0.21px">634eac75c32</div>
<div class="c" style="left:106px;top:767px;width:79px">30.053</div>
<div class="c" style="left:186px;top:767px;width:79px">30.053</div>
<div class="c" style="left:266px;top:767px;width:79px">2022-10-18T12</div>
<div class="c" style="left:346px;top:767px;width:79px">0.118</div>
<div class="c" style="left:426px;top:767px;width:79px">2022-10-18T12</div>
<div class="c n" style="left:506px;top:767px;width:79px">1,67E+12</div>
<div class="c" style="left:586px;top:767px;width:79px">66.27</div>
<div class="c" style="left:666px;top:767px;width:79px">64.4</div>
<div class="c" style="left:746px;top:767px;width:79px">64.7</div>
<div class="c" style="left:826px;top:767px;width:79px">64.4</div>
<div class="c" style="left:906px;top:767px;width:79px">0.091</div>
<div class="c" style="left:986px;top:767px;width:79px">79.26</div>
<div class="c" style="left:1066px;top:767px;width:79px">72.5</div>
<div class="c" style="left:1146px;top:767px;width:79px">72.2</div>
<div class="c" style="left:1226px;top:767px;width:79px">72.5</div>
<div class="c n" style="left:1306px;top:767px;width:79px">0</div>
<div class="c n" style="left:1386px;top:767px;width:79px">66</div>
<div class="c n" style="left:1466px;top:767px;width:79px">77</div>
<div class="c n" style="left:1546px;top:767px;width:79px">79</div>
<div class="rh" style="top:787px">29</div>
<div class="c i" style="left:26px;top:787px;width:79px;letter-spacing:-0.14px">634eacb28821</div>
<div class="c" style="left:106px;top:787px;width:79px">30.056</div>
<div class="c" style="left:186px;top:787px;width:79px">30.056</div>
<div class="c" style="left:266px;top:787px;width:79px">2022-10-18T12</div>
<div class="c" style="left:346px;top:787px;width:79px">0.118</div>
<div class="c" style="left:426px;top:787px;width:79px">2022-10-18T12</div>
<div class="c n" style="left:506px;top:787px;width:79px">1,67E+12</div>
<div class="c" style="left:586px;top:787px;width:79px">65.38</div>
<div class="c" style="left:666px;top:787px;width:79px">64.2</div>
<div class="c" style="left:746px;top:787px;width:79px">64.7</div>
<div class="c" style="left:826px;top:787px;width:79px">64.4</div>
<div class="c" style="left:906px;top:787px;width:79px">0.091</div>
<div class="c" style="left:986px;top:787px;width:79px">79.17</div>
<div class="c" style="left:1066px;top:787px;width:79px">72.3</div>
<div class="c" style="left:1146px;top:787px;width:79px">72.2</div>
<div class="c" style="left:1226px;top:787px;width:79px">72.5</div>
<div class="c n" style="left:1306px;top:787px;width:79px">0</div>
<div class="c n" style="left:1386px;top:787px;width:79px">64</div>
<div class="c n" style="left:1466px;top:787px;width:79px">77</div>
<div class="c n" style="left:1546px;top:787px;width:79px">79</div>
<div class="rh" style="top:807px">30</div>
<div class="c i" style="left:26px;top:807px;width:79px;letter-spacing:-0.13px">634eaceee20b</div>
<div class="c" style="left:106px;top:807px;width:79px">30.053</div>
<div class="c" style="left:186px;top:807px;width:79px">30.053</div>
<div class="c" style="left:266px;top:807px;width:79px">2022-10-18T12</div>
<div class="c" style="left:346px;top:807px;width:79px">0.118</div>
<div class="c" style="left:426px;top:807px;width:79px">2022-10-18T12</div>
<div class="c n" style="left:506px;top:807px;width:79px">1,67E+12</div>
<div class="c" style="left:586px;top:807px;width:79px">65.83</div>
<div class="c" style="left:666px;top:807px;width:79px">64.2</div>
<div class="c" style="left:746px;top:807px;width:79px">64.7</div>
<div class="c" style="left:826px;top:807px;width:79px">64.4</div>
<div class="c" style="left:906px;top:807px;width:79px">0.091</div>
<div class="c" style="left:986px;top:807px;width:79px">79.22</div>
<div class="c" style="left:1066px;top:807px;width:79px">72.3</div>
<div class="c" style="left:1146px;top:807px;width:79px">72.2</div>
<div class="c" style="left:1226px;top:807px;width:79px">72.5</div>
<div class="c n" style="left:1306px;top:807px;width:79px">0</div>
<div class="c n" style="left:1386px;top:807px;width:79px">65</div>
<div class="c n" style="left:1466px;top:807px;width:79px">77</div>
<div class="c n" style="left:1546px;top:807px;width:79px">79</div>
<div class="rh" style="top:827px">31</div>
<div class="c i" style="left:26px;top:827px;width:79px;letter-spacing:-0.14px">634ead2919c5</div>
<div class="c" style="left:106px;top:827px;width:79px">30.053</div>
<div class="c" style="left:186px;top:827px;width:79px">30.053</div>
<div class="c" style="left:266px;top:827px;width:79px">2022-10-18T12</div>
<div class="c" style="left:346px;top:827px;width:79px">0.118</div>
<div class="c" style="left:426px;top:827px;width:79px">2022-10-18T12</div>
<div class="c n" style="left:506px;top:827px;width:79px">1,67E+12</div>
<div class="c" style="left:586px;top:827px;width:79px">65.99</div>
<div class="c" style="left:666px;top:827px;width:79px">64.4</div>
<div class="c" style="left:746px;top:827px;width:79px">64.7</div>
<div class="c" style="left:826px;top:827px;width:79px">64.4</div>
<div class="c" style="left:906px;top:827px;width:79px">0.091</div>
<div class="c" style="left:986px;top:827px;width:79px">78.93</div>
<div class="c" style="left:1066px;top:827px;width:79px">72.5</div>
<div class="c" style="left:1146px;top:827px;width:79px">72.2</div>
<div class="c" style="left:1226px;top:827px;width:79px">72.5</div>
<div class="c n" style="left:1306px;top:827px;width:79px">0</div>
<div class="c n" style="left:1386px;top:827px;width:79px">66</div>
<div class="c n" style="left:1466px;top:827px;width:79px">77</div>
<div class="c n" style="left:1546px;top:827px;width:79px">79</div>
<div class="rh" style="top:847px">32</div>
<div class="c i" style="left:26px;top:847px;width:79px;letter-spacing:-0.14px">634eada1c328</div>
<div class="c" style="left:106px;top:847px;width:79px">30.053</div>
<div class="c" style="left:186px;top:847px;width:79px">30.053</div>
<div class="c" style="left:266px;top:847px;width:79px">2022-10-18T12</div>
<div class="c" style="left:346px;top:847px;width:79px">0.118</div>
<div class="c" style="left:426px;top:847px;width:79px">2022-10-18T12</div>
<div class="c n" style="left:506px;top:847px;width:79px">1,67E+12</div>
<div class="c" style="left:586px;top:847px;width:79px">65.36</div>
<div class="c" style="left:666px;top:847px;width:79px">64.2</div>
<div class="c" style="left:746px;top:847px;width:79px">64.5</div>
<div class="c" style="left:826px;top:847px;width:79px">64.4</div>
<div class="c" style="left:906px;top:847px;width:79px">0.091</div>
<div class="c" style="left:986px;top:847px;width:79px">78.67</div>
<div class="c" style="left:1066px;top:847px;width:79px">72.3</div>
<div class="c n" style="left:1146px;top:847px;width:79px">72</div>
<div class="c" style="left:1226px;top:847px;width:79px">72.5</div>
<div class="c n" style="left:1306px;top:847px;width:79px">0</div>
<div class="c n" style="left:1386px;top:847px;width:79px">65</div>
<div class="c n" style="left:1466px;top:847px;width:79px">77</div>
<div class="c n" style="left:1546px;top:847px;width:79px">79</div>
<div class="rh" style="top:867px">33</div>
<div class="c i" style="left:26px;top:867px;width:79px;letter-spacing:-0.07px">634eadccedc4</div>
<div class="c" style="left:106px;top:867px;width:79px">30.056</div>
<div class="c" style="left:186px;top:867px;width:79px">30.056</div>
<div class="c" style="left:266px;top:867px;width:79px">2022-10-18T12</div>
<div class="c" style="left:346px;top:867px;width:79px">0.118</div>
<div class="c" style="left:426px;top:867px;width:79px">2022-10-18T12</div>
<div class="c n" style="left:506px;top:867px;width:79px">1,67E+12</div>
<div class="c" style="left:586px;top:867px;width:79px">65.17</div>
<div class="c" style="left:666px;top:867px;width:79px">64.4</div>
<div class="c" style="left:746px;top:867px;width:79px">64.7</div>
<div class="c" style="left:826px;top:867px;width:79px">64.4</div>
<div class="c" style="left:906px;top:867px;width:79px">0.091</div>
<div class="c" style="left:986px;top:867px;width:79px">78.45</div>
<div class="c" style="left:1066px;top:867px;width:79px">72.5</div>
<div class="c" style="left:1146px;top:867px;width:79px">72.2</div>
<div class="c" style="left:1226px;top:867px;width:79px">72.5</div>
<div class="c n" style="left:1306px;top:867px;width:79px">0</div>
<div class="c n" style="left:1386px;top:867px;width:79px">65</div>
<div class="c n" style="left:1466px;top:867px;width:79px">77</div>
<div class="c n" style="left:1546px;top:867px;width:79px">79</div>
<div class="rh" style="top:887px">34</div>
<div class="c i" style="left:26px;top:887px;width:79px;letter-spacing:-0.05px">634eadde0ca7</div>
<div class="c" style="left:106px;top:887px;width:79px">30.056</div>
<div class="c" style="left:186px;top:887px;width:79px">30.056</div>
<div class="c" style="left:266px;top:887px;width:79px">2022-10-18T12</div>
<div class="c" style="left:346px;top:887px;width:79px">0.118</div>
<div class="c" style="left:426px;top:887px;width:79px">2022-10-18T12</div>
<div class="c n" style="left:506px;top:887px;width:79px">1,67E+12</div>
<div class="c" style="left:586px;top:887px;width:79px">65.17</div>
<div class="c" style="left:666px;top:887px;width:79px">64.4</div>
<div class="c" style="left:746px;top:887px;width:79px">64.7</div>
<div class="c" style="left:826px;top:887px;width:79px">64.4</div>
<div class="c" style="left:906px;top:887px;width:79px">0.091</div>
<div class="c" style="left:986px;top:887px;width:79px">78.45</div>
<div class="c" style="left:1066px;top:887px;width:79px">72.5</div>
<div class="c" style="left:1146px;top:887px;width:79px">72.2</div>
<div class="c" style="left:1226px;top:887px;width:79px">72.5</div>
<div class="c n" style="left:1306px;top:887px;width:79px">0</div>
<div class="c n" style="left:1386px;top:887px;width:79px">65</div>
<div class="c n" style="left:1466px;top:887px;width:79px">77</div>
<div class="c n" style="left:1546px;top:887px;width:79px">79</div>
<div class="rh" style="top:907px">35</div>
<div class="c i" style="left:26px;top:907px;width:79px;letter-spacing:-0.15px">634eae1c0ea9</div>
<div class="c" style="left:106px;top:907px;width:79px">30.053</div>
<div class="c" style="left:186px;top:907px;width:79px">30.053</div>
<div class="c" style="left:266px;top:907px;width:79px">2022-10-18T12</div>
<div class="c" style="left:346px;top:907px;width:79px">0.118</div>
<div class="c" style="left:426px;top:907px;width:79px">2022-10-18T12</div>
<div class="c n" style="left:506px;top:907px;width:79px">1,67E+12</div>
<div class="c" style="left:586px;top:907px;width:79px">65.17</div>
<div class="c" style="left:666px;top:907px;width:79px">64.2</div>
<div class="c" style="left:746px;top:907px;width:79px">64.5</div>
<div class="c" style="left:826px;top:907px;width:79px">64.4</div>
<div class="c" style="left:906px;top:907px;width:79px">0.091</div>
<div class="c" style="left:986px;top:907px;width:79px">78.45</div>
<div class="c" style="left:1066px;top:907px;width:79px">72.3</div>
<div class="c n" style="left:1146px;top:907px;width:79px">72</div>
<div class="c" style="left:1226px;top:907px;width:79px">72.5</div>
<div class="c n" style="left:1306px;top:907px;width:79px">0</div>
<div class="c n" style="left:1386px;top:907px;width:79px">65</div>
<div class="c n" style="left:1466px;top:907px;width:79px">77</div>
<div class="c n" style="left:1546px;top:907px;width:79px">79</div>
<div class="rh" style="top:927px">36</div>
<div class="c i" style="left:26px;top:927px;width:79px;letter-spacing:-0.17px">634eae553432</div>
<div class="c" style="left:106px;top:927px;width:79px">30.056</div>
<div class="c" style="left:186px;top:927px;width:79px">30.056</div>
<div class="c" style="left:266px;top:927px;width:79px">2022-10-18T12</div>
<div class="c" style="left:346px;top:927px;width:79px">0.118</div>
<div class="c" style="left:426px;top:927px;width:79px">2022-10-18T12</div>
<div class="c n" style="left:506px;top:927px;width:79px">1,67E+12</div>
<div class="c" style="left:586px;top:927px;width:79px">65.61</div>
<div class="c" style="left:666px;top:927px;width:79px">64.2</div>
<div class="c" style="left:746px;top:927px;width:79px">64.5</div>
<div class="c" style="left:826px;top:927px;width:79px">64.4</div>
<div class="c" style="left:906px;top:927px;width:79px">0.091</div>
<div class="c" style="left:986px;top:927px;width:79px">78.49</div>
<div class="c" style="left:1066px;top:927px;width:79px">72.3</div>
<div class="c n" style="left:1146px;top:927px;width:79px">72</div>
<div class="c" style="left:1226px;top:927px;width:79px">72.5</div>
<div class="c n" style="left:1306px;top:927px;width:79px">0</div>
<div class="c n" style="left:1386px;top:927px;width:79px">66</div>
<div class="c n" style="left:1466px;top:927px;width:79px">77</div>
<div class="c n" style="left:1546px;top:927px;width:79px">79</div>
<div class="rh" style="top:947px">37</div>
<div class="c i" style="left:26px;top:947px;width:79px;letter-spacing:-0.04px">634eaf0a7cd4</div>
<div class="c" style="left:106px;top:947px;width:79px">30.05</div>
<div class="c" style="left:186px;top:947px;width:79px">30.05</div>
<div class="c" style="left:266px;top:947px;width:79px">2022-10-18T12</div>
<div class="c" style="left:346px;top:947px;width:79px">0.118</div>
<div class="c" style="left:426px;top:947px;width:79px">2022-10-18T12</div>
<div class="c n" style="left:506px;top:947px;width:79px">1,67E+12</div>
<div class="c" style="left:586px;top:947px;width:79px">65.17</div>
<div class="c" style="left:666px;top:947px;width:79px">64.2</div>
<div class="c" style="left:746px;top:947px;width:79px">64.7</div>
<div class="c" style="left:826px;top:947px;width:79px">64.2</div>
<div class="c" style="left:906px;top:947px;width:79px">0.091</div>
<div class="c" style="left:986px;top:947px;width:79px">78.45</div>
<div class="c" style="left:1066px;top:947px;width:79px">72.3</div>
<div class="c" style="left:1146px;top:947px;width:79px">72.2</div>
<div class="c" style="left:1226px;top:947px;width:79px">72.3</div>
<div class="c n" style="left:1306px;top:947px;width:79px">0</div>
<div class="c n" style="left:1386px;top:947px;width:79px">65</div>
<div class="c n" style="left:1466px;top:947px;width:79px">77</div>
<div class="c n" style="left:1546px;top:947px;width:79px">79</div>
<div id="vl"></div><div style="position:absolute;left:0;top:226px;width:25px;height:1px;background:#c4c4c4"></div><div id="selbox"></div><div id="selh"></div>
</div></div>
<svg id="ui" width="1676" height="1010" viewBox="0 0 1676 1010">
<rect x="0" y="0" width="1676" height="34" fill="#444444"/>
<linearGradient id="tbg" x1="0" y1="0" x2="1" y2="0"><stop offset="0" stop-color="#444444"/><stop offset="0.12" stop-color="#3d3d3d"/><stop offset="1" stop-color="#3c3c3c"/></linearGradient>
<rect x="1180" y="0" width="496" height="34" fill="url(#tbg)"/>
<g fill="#424242"><circle cx="1330" cy="4" r="22"/><circle cx="1425" cy="36" r="20"/><circle cx="1585" cy="2" r="18"/><circle cx="1640" cy="34" r="16"/></g>
<rect x="0" y="34" width="1676" height="1" fill="#bebbb8"/>
<rect x="720" y="0" width="47.5" height="1" fill="#3f9b12"/>
<rect x="767.5" y="0" width="193.5" height="1" fill="#1f1f1f"/>
<rect x="0" y="34" width="1676" height="127" fill="#bebbb8"/>
<linearGradient id="shd" x1="0" y1="0" x2="0" y2="1"><stop offset="0" stop-color="#4c4c4c"/><stop offset="1" stop-color="#666666"/></linearGradient>
<rect x="0" y="161" width="1676" height="4" fill="url(#shd)"/>
<path d="M21,22.5 V12.5 H26 L27.5,14.5 H33.5 V16.5 M21,22.5 L24.2,16.5 H36.3 L33,22.5 Z" fill="none" stroke="#ffffff" stroke-width="1.1" stroke-linejoin="miter"/>
<path d="M52.5,10.5 H59.5 L63.5,14.5 V25.5 H52.5 Z M59.5,10.5 V14.5 H63.5" fill="none" stroke="#ffffff" stroke-width="1.2"/>
<line x1="76.5" y1="3" x2="76.5" y2="31" stroke="#9a9a9a" stroke-width="1"/>
<path d="M89.5,15 V10.5 H97 L100,13.5 V15 M97,10.5 V13.5 H100 M87.5,15.5 H102.5 V23.5 H87.5 Z M90,25.5 H100" fill="none" stroke="#ffffff" stroke-width="1.1"/>
<path d="M116.5,10.5 H131.5 V25.5 H119 L116.5,23 Z M120.5,10.5 V16.5 H128.5 V10.5 M120.5,25.5 V19.5 H128.5 V25.5" fill="none" stroke="#ffffff" stroke-width="1.1"/>
<line x1="142.5" y1="3" x2="142.5" y2="31" stroke="#9a9a9a" stroke-width="1"/>
<path d="M155.5,25.5 V10.5 H162.5 L166.5,14.5 V17 M162.5,10.5 V14.5 H166.5 M155.5,25.5 H158" fill="none" stroke="#ffffff" stroke-width="1.1"/>
<path d="M160.5,19.5 V17.5 H166.5 V19.5 M158.5,19.5 H168.5 V23.5 H158.5 Z M160.5,23.5 V25.5 H166.5 V23.5" fill="none" stroke="#ffffff" stroke-width="1.1"/>
<path d="M185.5,14.5 V10.5 H194.5 V14.5 M189,22.5 H182.5 V14.5 H197.5 V17 M185.5,20 V25.5 H189 " fill="none" stroke="#ffffff" stroke-width="1.1"/>
<rect x="184.5" y="16.5" width="2" height="1" fill="#ffffff"/>
<circle cx="193.5" cy="21.5" r="4" fill="none" stroke="#ffffff" stroke-width="1.1"/>
<path d="M191.5,21.5 L193,23 L195.7,20" fill="none" stroke="#ffffff" stroke-width="1.1"/>
<line x1="208.5" y1="3" x2="208.5" y2="31" stroke="#9a9a9a" stroke-width="1"/>
<path d="M220.5,11 V17.5 H227 M220.5,17.5 C223,12 229,10.5 232,14 C235,18 231,22 225,26" fill="none" stroke="#c8c8c8" stroke-width="1.2"/>
<path d="M240.9,15.0 L243.5,17.900000000000002 L246.1,15.0" fill="none" stroke="#c8c8c8" stroke-width="1.1" stroke-linecap="butt" stroke-linejoin="miter"/>
<path d="M272.5,11 V17.5 H266 M272.5,17.5 C270,12 264,10.5 261,14 C258,18 262,22 268,26" fill="none" stroke="#c8c8c8" stroke-width="1.2"/>
<path d="M279.9,15.0 L282.5,17.900000000000002 L285.1,15.0" fill="none" stroke="#c8c8c8" stroke-width="1.1" stroke-linecap="butt" stroke-linejoin="miter"/>
<path d="M305.8,22 V17.5 L312.5,10.5 H297.5 L303.6,17.5 V24.8" fill="none" stroke="#c8c8c8" stroke-width="1.2"/>
<path d="M307,20.5 L312.8,26 M312.8,20.5 L307,26" fill="none" stroke="#c8c8c8" stroke-width="1.2"/>
<line x1="329.5" y1="14.5" x2="337.5" y2="14.5" stroke="#ffffff" stroke-width="1.2"/>
<path d="M330,17 L333.5,20.3 L337,17" fill="none" stroke="#ffffff" stroke-width="1.2"/>
<text x="473.50" y="21.50" font-size="12.6" fill="#ffffff" letter-spacing="-0.392">dataTotal</text>
<path d="M526.5,14 L531.5,19 L536.5,14" fill="none" stroke="#ffffff" stroke-width="1.3"/>
<rect x="664" y="5" width="368" height="24" fill="#696969"/>
<circle cx="692.5" cy="14.5" r="4.6" fill="none" stroke="#e6e6e6" stroke-width="1.2"/>
<line x1="689.3" y1="17.8" x2="684.5" y2="22.8" stroke="#e6e6e6" stroke-width="1.3"/>
<text x="714.00" y="21.20" font-size="12.5" fill="#dcdcdc" letter-spacing="-0.354">Rechercher (Alt+Q)</text>
<text x="1371.00" y="21.60" font-size="11.8" fill="#ffffff" letter-spacing="-0.509">Lukas LeJossec</text>
<defs><clipPath id="av"><circle cx="1472" cy="17" r="12.1"/></clipPath></defs>
<g clip-path="url(#av)"><rect x="1459" y="4" width="26" height="26" fill="#bcbcba"/><path d="M1471,4 H1485 V24 H1476 Z" fill="#cbbfa6"/><circle cx="1463.5" cy="13.5" r="1.2" fill="#6b4a2a"/><circle cx="1466" cy="8" r="1.1" fill="#5a3c22"/><circle cx="1462.5" cy="18" r="1.3" fill="#6b4a2a"/><circle cx="1469.5" cy="6.5" r="1" fill="#5a3c22"/><circle cx="1464" cy="21.5" r="1.6" fill="#7a5226"/><rect x="1480.5" y="11.5" width="3.5" height="3" fill="#b5502a"/><path d="M1460,22 L1467,20 L1467,27 L1463,27 Z" fill="#a9802e"/><rect x="1465.6" y="16.5" width="3" height="5" fill="#4f82c4"/><path d="M1459,30 L1463,25 Q1468,21.5 1472,23.5 Q1478,20 1483,22.5 L1485,30 Z" fill="#47141a"/><path d="M1471,22 H1476.5 L1476,28 L1472,28 Z" fill="#e0a165"/><ellipse cx="1472.8" cy="17.2" rx="5.3" ry="6.6" fill="#dd9457"/><path d="M1467.3,15.5 Q1467,9.5 1472.5,9.3 Q1478.5,9.5 1478.2,16 Q1477.5,12.8 1475.5,11.8 Q1471,11 1468.6,12.6 Q1467.6,13.8 1467.3,15.5 Z" fill="#4a3020"/><rect x="1470.3" y="20" width="2.6" height="0.9" fill="#c8483c"/><circle cx="1473.7" cy="15.3" r="0.7" fill="#f4e6da"/></g>
<path d="M1512.5,11.5 H1524.5 V20.5 H1512.5 Z M1512.5,13.5 H1524.5" fill="none" stroke="#ffffff" stroke-width="1"/>
<path d="M1518.5,19 V15 M1516.3,17 L1518.5,14.8 L1520.7,17" fill="none" stroke="#ffffff" stroke-width="1"/>
<line x1="1560" y1="15.5" x2="1570" y2="15.5" stroke="#ffffff" stroke-width="1"/>
<path d="M1605.5,13.5 H1613.5 V20.5 H1605.5 Z M1607.5,13.5 V11.5 H1615.5 V18.5 H1613.5" fill="none" stroke="#ffffff" stroke-width="1" stroke-linejoin="round"/>
<path d="M1652.5,11 L1662.5,21 M1662.5,11 L1652.5,21" fill="none" stroke="#ffffff" stroke-width="1.1"/>
<text x="14.00" y="53.70" font-size="12.9" fill="#262626" letter-spacing="-0.284">Fichier</text>
<text x="79.00" y="53.70" font-size="12.9" fill="#262626" letter-spacing="0.069">Accueil</text>
<text x="150.00" y="53.70" font-size="12.9" fill="#262626" letter-spacing="0.066">Insertion</text>
<text x="229.00" y="53.70" font-size="12.9" fill="#262626" letter-spacing="0.232">Mise en page</text>
<text x="338.00" y="53.70" font-size="12.9" fill="#262626" letter-spacing="-0.108">Formules</text>
<text x="421.00" y="53.70" font-size="12.9" fill="#262626" letter-spacing="-0.272">Données</text>
<text x="501.00" y="53.70" font-size="12.9" fill="#262626" letter-spacing="-0.353">Révision</text>
<text x="578.00" y="53.70" font-size="12.9" fill="#262626" letter-spacing="-0.069">Affichage</text>
<text x="661.00" y="53.70" font-size="12.9" fill="#262626" letter-spacing="0.086">Développeur</text>
<text x="764.00" y="53.70" font-size="12.9" fill="#262626" letter-spacing="0.061">Aide</text>
<text x="820.00" y="53.70" font-size="12.9" fill="#262626" letter-spacing="0.238">Antidote</text>
<rect x="79" y="59.1" width="43" height="2.8" fill="#262626"/>
<rect x="1452.5" y="37.5" width="121" height="22" fill="#edebe9" stroke="#d2d0ce" stroke-width="1" rx="2"/>
<path d="M1461.5,43.5 H1470.5 V50.5 H1465.5 L1463.5,53 V50.5 H1461.5 Z" fill="none" stroke="#262626" stroke-width="1" stroke-linejoin="miter"/>
<text x="1476.00" y="53.60" font-size="12.9" fill="#262626" letter-spacing="0.375">Commentaires</text>
<rect x="1582.5" y="37.5" width="85" height="22" fill="#edebe9" stroke="#d2d0ce" stroke-width="1" rx="2"/>
<path d="M1592.5,46.5 H1590.5 V54.5 H1600.5 V51.5 M1593.5,51.5 C1594,47.5 1596.5,45.8 1599.5,45.8 M1597.3,42.8 L1600.6,45.8 L1597.3,48.8" fill="none" stroke="#262626" stroke-width="1"/>
<text x="1606.00" y="53.60" font-size="12.9" fill="#262626" letter-spacing="0.361">Partager</text>
<rect x="18" y="76" width="21" height="24" fill="#c27a2c" rx="1"/>
<rect x="19.2" y="77.2" width="18.6" height="21.6" fill="#eaa85a"/>
<rect x="21" y="79.5" width="15" height="18.5" fill="#f5f7f7"/>
<path d="M22.5,79.5 V75.5 H25.3 C25.3,71.3 31.7,71.3 31.7,75.5 H34.5 V79.5 Z" fill="#f5f7f7" stroke="#333" stroke-width="1"/>
<rect x="31.6" y="84.6" width="13" height="16.8" fill="#f5f7f7" stroke="#1f1f1f" stroke-width="1.2"/>
<text x="13.00" y="116.60" font-size="11.7" fill="#262626" letter-spacing="0.089">Coller</text>
<path d="M25.9,127.00000000000001 L28.5,129.90000000000003 L31.1,127.00000000000001" fill="none" stroke="#262626" stroke-width="1.3" stroke-linecap="butt" stroke-linejoin="miter"/>
<path d="M58.3,71.5 L63.7,83 M63.7,71.5 L58.3,83" fill="none" stroke="#333" stroke-width="1.1"/>
<circle cx="57.9" cy="85.1" r="1.7" fill="none" stroke="#2b6fc6" stroke-width="1.2"/><circle cx="64.1" cy="85.1" r="1.7" fill="none" stroke="#2b6fc6" stroke-width="1.2"/>
<path d="M53.8,95.7 H59.6 V108.3 H53.8 Z" fill="#f5f7f7" stroke="#1f1f1f" stroke-width="1.1"/>
<path d="M59.9,99 H65.5 L68.5,102 V110.3 H59.9 Z" fill="#f5f7f7" stroke="#1f1f1f" stroke-width="1.1"/>
<path d="M65.5,99 V102 H68.5" fill="none" stroke="#1f1f1f" stroke-width="0.8"/>
<path d="M62.2,105.5 H66.2 M62.2,107.5 H66.2" fill="none" stroke="#1f1f1f" stroke-width="1"/>
<path d="M75.7,102.35000000000001 L78.4,105.35 L81.10000000000001,102.35000000000001" fill="none" stroke="#262626" stroke-width="1.3" stroke-linecap="butt" stroke-linejoin="miter"/>
<path d="M53.8,126.4 L62.2,123.2 L66,128 L60,133.2 Z" fill="#f5f7f7" stroke="#c27a2c" stroke-width="1.1" stroke-linejoin="round"/>
<path d="M55.5,127.8 L60.8,130 L64.3,128.6 L65.6,128.3 L60,133 Z" fill="#d88b3a"/>
<path d="M61,122.6 L66.3,129 " fill="none" stroke="#1f1f1f" stroke-width="2.6"/>
<path d="M61.3,123 L66,128.6 " fill="none" stroke="#f5f7f7" stroke-width="1"/>
<path d="M63.6,124.6 L67.8,119.8" fill="none" stroke="#1f1f1f" stroke-width="3.2" stroke-linecap="round"/>
<path d="M63.8,124.4 L67.8,119.8" fill="none" stroke="#f5f7f7" stroke-width="1.4" stroke-linecap="round"/>
<text x="4.00" y="156.30" font-size="11.5" fill="#262626" letter-spacing="-0.372">Presse-papiers</text>
<path d="M85.5,153.5 V148.5 H90.5 M88,151 L92.5,155.5 M92.5,151.5 V155.5 H88.5" fill="none" stroke="#333" stroke-width="1"/>
<line x1="96.5" y1="68" x2="96.5" y2="155.5" stroke="#83817f" stroke-width="1"/>
<rect x="105.5" y="76.5" width="122" height="22" fill="#d4d2d0" stroke="#8a8886" stroke-width="1"/>
<text x="108.50" y="92.30" font-size="11.7" fill="#262626" letter-spacing="0.141">Calibri</text>
<path d="M218.6,88.5 L221.2,91.39999999999999 L223.79999999999998,88.5" fill="none" stroke="#262626" stroke-width="1.3" stroke-linecap="butt" stroke-linejoin="miter"/>
<rect x="230.5" y="76.5" width="42" height="22" fill="#d4d2d0" stroke="#8a8886" stroke-width="1"/>
<text x="233.50" y="92.30" font-size="11.7" fill="#262626" letter-spacing="-0.144">11</text>
<path d="M263.4,88.5 L266,91.39999999999999 L268.6,88.5" fill="none" stroke="#262626" stroke-width="1.3" stroke-linecap="butt" stroke-linejoin="miter"/>
<text x="279.00" y="92.50" font-size="16" fill="#262626" letter-spacing="0.328">A</text>
<path d="M289.5,83 L292,80.5 L294.5,83" fill="none" stroke="#2b6fc6" stroke-width="1.1"/>
<text x="304.00" y="92.50" font-size="13.5" fill="#262626" letter-spacing="0.495">A</text>
<path d="M313.5,80.5 L316,83 L318.5,80.5" fill="none" stroke="#2b6fc6" stroke-width="1.1"/>
<text x="111.00" y="123.00" font-size="12.7" fill="#262626" font-weight="700" letter-spacing="-0.378">G</text>
<text x="137" y="123" font-size="14" fill="#262626" font-style="italic" font-family="'Liberation Serif',serif">I</text>
<text x="160.00" y="123.00" font-size="12.1" fill="#262626" letter-spacing="-0.571">S</text>
<line x1="160" y1="125.5" x2="168" y2="125.5" stroke="#262626" stroke-width="1"/>
<path d="M178.9,117.5 L181.5,120.39999999999999 L184.1,117.5" fill="none" stroke="#262626" stroke-width="1.3" stroke-linecap="butt" stroke-linejoin="miter"/>
<line x1="194.5" y1="109" x2="194.5" y2="130" stroke="#83817f" stroke-width="1"/>
<rect x="202" y="111" width="15" height="14.5" fill="#f5f7f7"/>
<path d="M202.5,111 V125 M216.5,111 V125 M209.5,111 V125" fill="none" stroke="#1f1f1f" stroke-width="1" stroke-dasharray="1,1"/>
<path d="M202,111.5 H217 M202,118.5 H217" fill="none" stroke="#1f1f1f" stroke-width="1" stroke-dasharray="1,1"/>
<line x1="202" y1="125.6" x2="217" y2="125.6" stroke="#1f1f1f" stroke-width="1.5"/>
<path d="M224.9,117.5 L227.5,120.39999999999999 L230.1,117.5" fill="none" stroke="#262626" stroke-width="1.3" stroke-linecap="butt" stroke-linejoin="miter"/>
<line x1="240.5" y1="109" x2="240.5" y2="130" stroke="#83817f" stroke-width="1"/>
<path d="M250.8,118 L256.1,111.6 L261.2,117.2 L255.3,122.2 Z" fill="#f5f7f7" stroke="#1f1f1f" stroke-width="1.1" stroke-linejoin="round"/>
<path d="M254.8,113.8 L256,110.8 C256.6,109.6 257.8,110.4 257.7,111.4 V115.8" fill="none" stroke="#1f1f1f" stroke-width="1"/>
<path d="M259.8,114.6 C262.2,115.4 262.6,118 262,120.8" fill="none" stroke="#1f4fa0" stroke-width="2"/>
<rect x="248" y="123" width="16" height="4" fill="#ffff00"/>
<path d="M270.9,117.5 L273.5,120.39999999999999 L276.1,117.5" fill="none" stroke="#262626" stroke-width="1.3" stroke-linecap="butt" stroke-linejoin="miter"/>
<text x="290.20" y="122.00" font-size="14.8" fill="#262626">A</text>
<rect x="287" y="123" width="16" height="4" fill="#ff0000"/>
<path d="M309.9,117.5 L312.5,120.39999999999999 L315.1,117.5" fill="none" stroke="#262626" stroke-width="1.3" stroke-linecap="butt" stroke-linejoin="miter"/>
<text x="189.50" y="156.30" font-size="11.3" fill="#262626" letter-spacing="-0.355">Police</text>
<path d="M317.5,153.5 V148.5 H322.5 M320,151 L324.5,155.5 M324.5,151.5 V155.5 H320.5" fill="none" stroke="#333" stroke-width="1"/>
<line x1="328.5" y1="68" x2="328.5" y2="155.5" stroke="#83817f" stroke-width="1"/>
<line x1="341" y1="79.5" x2="355" y2="79.5" stroke="#2e2e2e" stroke-width="1.1"/>
<line x1="341" y1="87.5" x2="355" y2="87.5" stroke="#2e2e2e" stroke-width="1.1"/>
<line x1="343" y1="83.5" x2="353" y2="83.5" stroke="#2e2e2e" stroke-width="1.1"/>
<line x1="365" y1="81.5" x2="379" y2="81.5" stroke="#2e2e2e" stroke-width="1.1"/>
<line x1="365" y1="89.5" x2="379" y2="89.5" stroke="#2e2e2e" stroke-width="1.1"/>
<line x1="367" y1="85.5" x2="377" y2="85.5" stroke="#2e2e2e" stroke-width="1.1"/>
<rect x="385.5" y="76.5" width="21.5" height="22" fill="#9e9c9a" stroke="#6e6c6a" stroke-width="1"/>
<line x1="389" y1="87.5" x2="403" y2="87.5" stroke="#2e2e2e" stroke-width="1.1"/>
<line x1="389" y1="95.5" x2="403" y2="95.5" stroke="#2e2e2e" stroke-width="1.1"/>
<line x1="391" y1="91.5" x2="401" y2="91.5" stroke="#2e2e2e" stroke-width="1.1"/>
<line x1="411.5" y1="78" x2="411.5" y2="97" stroke="#83817f" stroke-width="1"/>
<text transform="translate(422.5,90) rotate(-45)" font-size="10.3" fill="#262626">ab</text>
<path d="M424.2,93.6 L434.7,83.3 M430.8,83.1 H434.9 V87.2" fill="none" stroke="#2a6fc9" stroke-width="1.2"/>
<path d="M440.0,86.45 L442.5,89.25 L445.0,86.45" fill="none" stroke="#262626" stroke-width="1.3" stroke-linecap="butt" stroke-linejoin="miter"/>
<line x1="466.5" y1="75" x2="466.5" y2="132" stroke="#83817f" stroke-width="1"/>
<text x="476.30" y="86.50" font-size="10.3" fill="#262626" letter-spacing="0.344">ab</text>
<text x="476.30" y="93.70" font-size="10.3" fill="#262626">c</text>
<path d="M489.6,86.8 C490,90.5 487,91.5 482.6,91.5 M485.8,88.4 L482.3,91.5 L485.8,94.6" fill="none" stroke="#2a6fc9" stroke-width="1.2"/>
<text x="493.50" y="91.80" font-size="11.7" fill="#262626" letter-spacing="0.094">Renvoyer à la ligne automatiquement</text>
<line x1="341" y1="112.5" x2="355" y2="112.5" stroke="#2e2e2e" stroke-width="1.1"/>
<line x1="341" y1="120.5" x2="355" y2="120.5" stroke="#2e2e2e" stroke-width="1.1"/>
<line x1="341" y1="116.5" x2="351" y2="116.5" stroke="#2e2e2e" stroke-width="1.1"/>
<line x1="341" y1="124.5" x2="351" y2="124.5" stroke="#2e2e2e" stroke-width="1.1"/>
<line x1="365" y1="112.5" x2="379" y2="112.5" stroke="#2e2e2e" stroke-width="1.1"/>
<line x1="365" y1="120.5" x2="379" y2="120.5" stroke="#2e2e2e" stroke-width="1.1"/>
<line x1="367" y1="116.5" x2="377" y2="116.5" stroke="#2e2e2e" stroke-width="1.1"/>
<line x1="367" y1="124.5" x2="377" y2="124.5" stroke="#2e2e2e" stroke-width="1.1"/>
<line x1="389" y1="112.5" x2="403" y2="112.5" stroke="#2e2e2e" stroke-width="1.1"/>
<line x1="389" y1="120.5" x2="403" y2="120.5" stroke="#2e2e2e" stroke-width="1.1"/>
<line x1="393" y1="116.5" x2="403" y2="116.5" stroke="#2e2e2e" stroke-width="1.1"/>
<line x1="393" y1="124.5" x2="403" y2="124.5" stroke="#2e2e2e" stroke-width="1.1"/>
<line x1="411.5" y1="109" x2="411.5" y2="130" stroke="#83817f" stroke-width="1"/>
<line x1="420" y1="112.5" x2="434" y2="112.5" stroke="#2e2e2e" stroke-width="1.1"/>
<line x1="420" y1="124.5" x2="434" y2="124.5" stroke="#2e2e2e" stroke-width="1.1"/>
<line x1="428.2" y1="116.5" x2="434" y2="116.5" stroke="#2e2e2e" stroke-width="1.1"/>
<line x1="428.2" y1="120.5" x2="434" y2="120.5" stroke="#2e2e2e" stroke-width="1.1"/>
<path d="M426.3,118.5 H420.3 M422.9,116 L420.3,118.5 L422.9,121" fill="none" stroke="#2b6fc6" stroke-width="1.2"/>
<line x1="444" y1="112.5" x2="458" y2="112.5" stroke="#2e2e2e" stroke-width="1.1"/>
<line x1="444" y1="124.5" x2="458" y2="124.5" stroke="#2e2e2e" stroke-width="1.1"/>
<line x1="452.4" y1="116.5" x2="458" y2="116.5" stroke="#2e2e2e" stroke-width="1.1"/>
<line x1="452.4" y1="120.5" x2="458" y2="120.5" stroke="#2e2e2e" stroke-width="1.1"/>
<path d="M444,118.5 H450 M447.4,116 L450,118.5 L447.4,121" fill="none" stroke="#2b6fc6" stroke-width="1.2"/>
<rect x="474.5" y="111.5" width="14" height="14" fill="#f5f7f7" stroke="#1f1f1f" stroke-width="1.1"/>
<rect x="474.6" y="114.6" width="13.8" height="7.8" fill="#f5f7f7" stroke="#2b6fc6" stroke-width="1.2"/>
<path d="M481.5,111.5 V114 M481.5,123 V125.5" fill="none" stroke="#1f1f1f" stroke-width="1"/>
<path d="M477,118.5 H486 M479,116.3 L476.8,118.5 L479,120.7 M484,116.3 L486.2,118.5 L484,120.7" fill="none" stroke="#2b6fc6" stroke-width="1.1"/>
<text x="493.50" y="123.60" font-size="11.7" fill="#262626" letter-spacing="-0.010">Fusionner et centrer</text>
<path d="M609.1,117.6 L611.5,120.3 L613.9,117.6" fill="none" stroke="#262626" stroke-width="1.3" stroke-linecap="butt" stroke-linejoin="miter"/>
<text x="479.50" y="156.30" font-size="11.7" fill="#262626" letter-spacing="-0.003">Alignement</text>
<path d="M694.5,153.5 V148.5 H699.5 M697,151 L701.5,155.5 M701.5,151.5 V155.5 H697.5" fill="none" stroke="#333" stroke-width="1"/>
<line x1="705.5" y1="68" x2="705.5" y2="155.5" stroke="#83817f" stroke-width="1"/>
<rect x="714.5" y="76.5" width="139" height="22" fill="#d4d2d0" stroke="#8a8886" stroke-width="1"/>
<text x="717.00" y="92.30" font-size="11.7" fill="#262626" letter-spacing="-0.140">Standard</text>
<path d="M844.4,87.0 L847,89.89999999999999 L849.6,87.0" fill="none" stroke="#262626" stroke-width="1.3" stroke-linecap="butt" stroke-linejoin="miter"/>
<text x="720.30" y="124.60" font-size="17.5" fill="#262626" textLength="8" lengthAdjust="spacingAndGlyphs">$</text>
<path d="M740.1,118.1 L742.5,120.8 L744.9,118.1" fill="none" stroke="#262626" stroke-width="1.3" stroke-linecap="butt" stroke-linejoin="miter"/>
<text x="756.50" y="125.60" font-size="18" fill="#262626" textLength="14.6" lengthAdjust="spacingAndGlyphs">%</text>
<text x="780.00" y="121.90" font-size="9.3" fill="#444" letter-spacing="-0.008">000</text>
<line x1="803.5" y1="109" x2="803.5" y2="130" stroke="#83817f" stroke-width="1"/>
<text x="821.30" y="117.80" font-size="8.9" fill="#333" letter-spacing="-0.349">0</text>
<text x="814.30" y="125.90" font-size="9.0" fill="#333" letter-spacing="-0.355">.00</text>
<path d="M819.8,115.3 H811.3 M814.3,112.3 L811.3,115.3 L814.3,118.3" fill="none" stroke="#2b6fc6" stroke-width="1.2"/>
<text x="838.70" y="117.80" font-size="8.7" fill="#333" letter-spacing="-0.346">.00</text>
<text x="843.40" y="125.90" font-size="8.3" fill="#333" letter-spacing="-0.321">.0</text>
<path d="M835,122.4 H843.4 M840.4,119.4 L843.4,122.4 L840.4,125.4" fill="none" stroke="#2b6fc6" stroke-width="1.2"/>
<text x="755.00" y="156.30" font-size="11.7" fill="#262626" letter-spacing="-0.122">Nombre</text>
<path d="M850.5,153.5 V148.5 H855.5 M853,151 L857.5,155.5 M857.5,151.5 V155.5 H853.5" fill="none" stroke="#333" stroke-width="1"/>
<line x1="861.5" y1="68" x2="861.5" y2="155.5" stroke="#83817f" stroke-width="1"/>
<rect x="902.5" y="75.5" width="27" height="21" fill="#f5f7f7" stroke="#1f1f1f" stroke-width="1.1"/>
<path d="M907.5,75.5 V96.5 M924.5,75.5 V96.5 M902.5,82.5 H929.5 M902.5,89.5 H929.5" fill="none" stroke="#1f1f1f" stroke-width="1"/>
<rect x="907.5" y="75.5" width="12" height="7" fill="#e4787e" stroke="#bf1e24" stroke-width="1"/>
<rect x="907.5" y="89.5" width="14" height="7" fill="#e4787e" stroke="#bf1e24" stroke-width="1"/>
<rect x="907.5" y="82.5" width="8" height="7" fill="#5fa2dd" stroke="#2a6fc9" stroke-width="1"/>
<text x="878.00" y="117.00" font-size="11.7" fill="#262626" letter-spacing="0.157">Mise en forme</text>
<text x="872.00" y="133.00" font-size="11.7" fill="#262626" letter-spacing="0.304">conditionnelle</text>
<path d="M952.1,127.10000000000001 L954.5,129.8 L956.9,127.10000000000001" fill="none" stroke="#262626" stroke-width="1.3" stroke-linecap="butt" stroke-linejoin="miter"/>
<rect x="999.5" y="75.5" width="27" height="21" fill="#f5f7f7" stroke="#1f1f1f" stroke-width="1.1"/>
<rect x="1008.5" y="82.5" width="18.5" height="14.5" fill="#5fa2dd"/>
<path d="M1008.5,75.5 V96.5 M1017.5,75.5 V82.5 M999.5,82.5 H1026.5 M999.5,89.5 H1008.5" fill="none" stroke="#1f1f1f" stroke-width="1"/>
<path d="M1017.5,82.5 V97 M1008.5,89.5 H1027 M1026.5,82.5 V97 M1008.5,96.5 H1027" fill="none" stroke="#2a6fc9" stroke-width="1"/>
<path d="M1027.5,83.5 L1016.5,94.5" fill="none" stroke="#1f1f1f" stroke-width="4" stroke-linecap="round"/>
<path d="M1027.5,83.5 L1016.5,94.5" fill="none" stroke="#f5f7f7" stroke-width="2" stroke-linecap="round"/>
<path d="M1017.5,92.5 C1013,91.5 1011,97 1007,100 C1012,102.5 1020,100 1017.5,92.5 Z" fill="#4f93d8" stroke="#2a6fc9" stroke-width="1"/>
<text x="964.00" y="117.00" font-size="11.7" fill="#262626" letter-spacing="0.170">Mettre sous forme</text>
<text x="980.00" y="133.00" font-size="11.7" fill="#262626" letter-spacing="-0.072">de tableau</text>
<path d="M1039.1,127.10000000000001 L1041.5,129.8 L1043.9,127.10000000000001" fill="none" stroke="#262626" stroke-width="1.3" stroke-linecap="butt" stroke-linejoin="miter"/>
<rect x="1077.5" y="75.5" width="27" height="21" fill="#f5f7f7" stroke="#1f1f1f" stroke-width="1.1"/>
<path d="M1077.5,80.5 H1104.5 M1077.5,91.5 H1104.5 M1082.5,75.5 V96.5 M1100.5,75.5 V96.5" fill="none" stroke="#1f1f1f" stroke-width="1"/>
<rect x="1082.5" y="80.5" width="18" height="11" fill="#5fa2dd" stroke="#2a6fc9" stroke-width="1"/>
<path d="M1106.0,83.5 L1095.0,94.5" fill="none" stroke="#1f1f1f" stroke-width="4" stroke-linecap="round"/>
<path d="M1106.0,83.5 L1095.0,94.5" fill="none" stroke="#f5f7f7" stroke-width="2" stroke-linecap="round"/>
<path d="M1096.0,92.5 C1091.5,91.5 1089.5,97 1085.5,100 C1090.5,102.5 1098.5,100 1096.0,92.5 Z" fill="#4f93d8" stroke="#2a6fc9" stroke-width="1"/>
<text x="1068.00" y="117.00" font-size="11.7" fill="#262626" letter-spacing="-0.265">Styles de</text>
<text x="1066.00" y="133.00" font-size="11.7" fill="#262626" letter-spacing="-0.003">cellules</text>
<path d="M1110.1,127.10000000000001 L1112.5,129.8 L1114.9,127.10000000000001" fill="none" stroke="#262626" stroke-width="1.3" stroke-linecap="butt" stroke-linejoin="miter"/>
<text x="979.00" y="156.30" font-size="11.0" fill="#262626" letter-spacing="-0.391">Styles</text>
<line x1="1126.5" y1="68" x2="1126.5" y2="155.5" stroke="#83817f" stroke-width="1"/>
<rect x="1142.5" y="75.5" width="27" height="21" fill="#f5f7f7" stroke="#1f1f1f" stroke-width="1.1"/>
<line x1="1151.5" y1="75.5" x2="1151.5" y2="96.5" stroke="#1f1f1f" stroke-width="1"/>
<line x1="1160.5" y1="75.5" x2="1160.5" y2="96.5" stroke="#1f1f1f" stroke-width="1"/>
<line x1="1142.5" y1="82.5" x2="1169.5" y2="82.5" stroke="#1f1f1f" stroke-width="1"/>
<line x1="1142.5" y1="89.5" x2="1169.5" y2="89.5" stroke="#1f1f1f" stroke-width="1"/>
<rect x="1147.5" y="82.5" width="24" height="7" fill="#5fa2dd" stroke="#2a6fc9" stroke-width="1"/>
<path d="M1154.5,82.5 V89.5 M1163.5,82.5 V89.5" fill="none" stroke="#2a6fc9" stroke-width="1"/>
<path d="M1153,86 H1141.5" fill="none" stroke="#f5f7f7" stroke-width="3"/>
<path d="M1153,84.5 H1144 M1153,87.5 H1144 M1146.5,80 L1140.7,86 L1146.5,92" fill="none" stroke="#3b82d6" stroke-width="1.2"/>
<text x="1138.00" y="116.80" font-size="11.7" fill="#262626" letter-spacing="-0.235">Insérer</text>
<path d="M1153.1,127.10000000000001 L1155.5,129.8 L1157.9,127.10000000000001" fill="none" stroke="#262626" stroke-width="1.3" stroke-linecap="butt" stroke-linejoin="miter"/>
<rect x="1193.5" y="75.5" width="27" height="21" fill="#f5f7f7" stroke="#1f1f1f" stroke-width="1.1"/>
<line x1="1202.5" y1="75.5" x2="1202.5" y2="96.5" stroke="#1f1f1f" stroke-width="1"/>
<line x1="1211.5" y1="75.5" x2="1211.5" y2="96.5" stroke="#1f1f1f" stroke-width="1"/>
<line x1="1193.5" y1="82.5" x2="1220.5" y2="82.5" stroke="#1f1f1f" stroke-width="1"/>
<line x1="1193.5" y1="89.5" x2="1220.5" y2="89.5" stroke="#1f1f1f" stroke-width="1"/>
<rect x="1211" y="83" width="11" height="6" fill="#bebbb8"/>
<rect x="1197.5" y="82.5" width="12" height="7" fill="#5fa2dd" stroke="#2a6fc9" stroke-width="1"/>
<line x1="1203.5" y1="82.5" x2="1203.5" y2="89.5" stroke="#2a6fc9" stroke-width="1"/>
<path d="M1209.5,82 L1214.5,86 L1209.5,90 Z" fill="#5fa2dd"/>
<path d="M1211.5,80.8 L1222,92 M1222,80.8 L1211.5,92" fill="none" stroke="#d93a2b" stroke-width="1.3"/>
<text x="1179.00" y="116.80" font-size="11.7" fill="#262626" letter-spacing="0.129">Supprimer</text>
<path d="M1204.1,127.10000000000001 L1206.5,129.8 L1208.9,127.10000000000001" fill="none" stroke="#262626" stroke-width="1.3" stroke-linecap="butt" stroke-linejoin="miter"/>
<rect x="1244.5" y="75.5" width="27" height="21" fill="#f5f7f7" stroke="#1f1f1f" stroke-width="1.1"/>
<path d="M1251.5,75.5 V96.5 M1264.5,75.5 V96.5 M1244.5,82.5 H1271.5 M1244.5,89.5 H1271.5" fill="none" stroke="#1f1f1f" stroke-width="1"/>
<rect x="1251.5" y="82.5" width="13" height="7" fill="#5fa2dd" stroke="#2a6fc9" stroke-width="1"/>
<path d="M1250.5,71.5 H1265.5 M1250.5,69.5 V73.5 M1265.5,69.5 V73.5" fill="none" stroke="#2a6fc9" stroke-width="1"/>
<text x="1239.00" y="116.80" font-size="11.7" fill="#262626" letter-spacing="0.190">Format</text>
<path d="M1255.6,127.10000000000001 L1258,129.8 L1260.4,127.10000000000001" fill="none" stroke="#262626" stroke-width="1.3" stroke-linecap="butt" stroke-linejoin="miter"/>
<text x="1187.00" y="156.30" font-size="11.7" fill="#262626" letter-spacing="-0.374">Cellules</text>
<line x1="1287.5" y1="68" x2="1287.5" y2="155.5" stroke="#83817f" stroke-width="1"/>
<text x="1300.60" y="84.70" font-size="18.3" fill="#1f1f1f" textLength="12.2" lengthAdjust="spacingAndGlyphs">Σ</text>
<path d="M1322.1,77.39999999999999 L1324.5,80.1 L1326.9,77.39999999999999" fill="none" stroke="#262626" stroke-width="1.3" stroke-linecap="butt" stroke-linejoin="miter"/>
<rect x="1299.5" y="94.5" width="15" height="13" fill="#f3f2f1" stroke="#3a3a3a" stroke-width="1"/>
<line x1="1299.5" y1="95.5" x2="1314.5" y2="95.5" stroke="#3a3a3a" stroke-width="2"/>
<path d="M1307,98 V105 M1304,102 L1307,105 L1310,102" fill="none" stroke="#2b6fc6" stroke-width="1.2"/>
<path d="M1320.1,100.6 L1322.5,103.3 L1324.9,100.6" fill="none" stroke="#262626" stroke-width="1.3" stroke-linecap="butt" stroke-linejoin="miter"/>
<path d="M1299.5,125.5 L1308.5,117 L1313.5,122.5 L1304.5,131 Z" fill="#f3f2f1" stroke="#a23da3" stroke-width="1.2" stroke-linejoin="round"/>
<path d="M1299.5,125.5 L1303.5,121.5 L1308.5,127 L1304.5,131 Z" fill="#b146c2" stroke="#a23da3" stroke-width="1"/>
<path d="M1320.1,123.6 L1322.5,126.3 L1324.9,123.6" fill="none" stroke="#262626" stroke-width="1.3" stroke-linecap="butt" stroke-linejoin="miter"/>
<text x="1341.80" y="84.80" font-size="15" fill="#2b6fc6" letter-spacing="0.995">A</text>
<text x="1343.00" y="98.80" font-size="14.5" fill="#262626" letter-spacing="0.644">Z</text>
<path d="M1354.5,79.5 H1369.5 L1364,86.5 V94.5 H1360 V86.5 Z" fill="#f5f7f7" stroke="#1f1f1f" stroke-width="1.2" stroke-linejoin="miter"/>
<text x="1338.00" y="117.00" font-size="11.7" fill="#262626" letter-spacing="-0.231">Trier et</text>
<text x="1336.00" y="133.00" font-size="11.7" fill="#262626" letter-spacing="0.250">filtrer</text>
<path d="M1368.1,127.10000000000001 L1370.5,129.8 L1372.9,127.10000000000001" fill="none" stroke="#262626" stroke-width="1.3" stroke-linecap="butt" stroke-linejoin="miter"/>
<circle cx="1421.5" cy="82.5" r="10" fill="#f3f2f1" stroke="#3a3a3a" stroke-width="1.1"/>
<line x1="1414" y1="90" x2="1403" y2="100.5" stroke="#3a3a3a" stroke-width="1.2"/>
<text x="1382.00" y="117.00" font-size="11.7" fill="#262626" letter-spacing="-0.123">Rechercher et</text>
<text x="1385.00" y="133.00" font-size="11.7" fill="#262626" letter-spacing="-0.280">sélectionner</text>
<path d="M1448.1,127.10000000000001 L1450.5,129.8 L1452.9,127.10000000000001" fill="none" stroke="#262626" stroke-width="1.3" stroke-linecap="butt" stroke-linejoin="miter"/>
<text x="1357.00" y="156.30" font-size="11.7" fill="#262626" letter-spacing="0.371">Édition</text>
<line x1="1465.5" y1="68" x2="1465.5" y2="155.5" stroke="#83817f" stroke-width="1"/>
<rect x="1489.5" y="70.5" width="31" height="31" fill="#f3f2f1" stroke="#262626" stroke-width="1.4"/>
<rect x="1490" y="71" width="30" height="4.5" fill="#8a8886"/>
<path d="M1500.5,74.5 V101 M1510.5,74.5 V101 M1490,83.5 H1520 M1490,92.5 H1520" fill="none" stroke="#8a8886" stroke-width="1"/>
<circle cx="1503.7" cy="83.6" r="9.6" fill="#f5f7f7" stroke="#1f1f1f" stroke-width="1.5"/>
<rect x="1499" y="81" width="3" height="7" fill="#8a8886"/>
<rect x="1502.5" y="78" width="3" height="10" fill="#f3f2f1" stroke="#262626" stroke-width="0.8"/>
<rect x="1506" y="80" width="3" height="8" fill="#5b9bd5"/>
<line x1="1510" y1="90.5" x2="1520.5" y2="101" stroke="#262626" stroke-width="1.6"/>
<text x="1476.00" y="117.00" font-size="11.7" fill="#262626" letter-spacing="-0.098">Analyse de</text>
<text x="1482.00" y="133.00" font-size="11.7" fill="#262626" letter-spacing="-0.148">données</text>
<text x="1484.00" y="156.30" font-size="11.4" fill="#262626" letter-spacing="-0.350">Analysis</text>
<line x1="1543.5" y1="68" x2="1543.5" y2="155.5" stroke="#83817f" stroke-width="1"/>
<path d="M1587.5,72.8 H1600 L1607.5,80 V99.5 H1587.5 Z" fill="#dddbd9"/>
<g transform="translate(1596.5,86.5) rotate(-45)"><rect x="-8" y="-3.2" width="13" height="6.4" fill="#dddbd9" stroke="#b3b1af" stroke-width="1.2"/><rect x="-5.5" y="-1.2" width="8.5" height="2.4" fill="none" stroke="#b3b1af" stroke-width="0.9"/><rect x="5.6" y="-4.6" width="4.2" height="9.2" fill="#d6d4d2" stroke="#b3b1af" stroke-width="1"/><rect x="10.5" y="-3" width="5.4" height="6" fill="#e6e4e2" stroke="#c4c2c0" stroke-width="0.8"/></g>
<text x="1571.00" y="117.00" font-size="11.7" fill="#7a7876" letter-spacing="0.040">Niveau de</text>
<text x="1554.00" y="133.00" font-size="11.7" fill="#7a7876" letter-spacing="0.318">confidentialité</text>
<path d="M1634.6,127.10000000000001 L1637,129.8 L1639.4,127.10000000000001" fill="none" stroke="#7a7876" stroke-width="1.3" stroke-linecap="butt" stroke-linejoin="miter"/>
<text x="1559.00" y="156.30" font-size="11.7" fill="#262626" letter-spacing="0.133">Confidentialité</text>
<line x1="1651.5" y1="68" x2="1651.5" y2="155.5" stroke="#83817f" stroke-width="1"/>
<path d="M1661,155.5 L1666,150.5 L1671,155.5" fill="none" stroke="#262626" stroke-width="1.2"/>
<rect x="5.5" y="171.5" width="101" height="25" fill="#b2b2b2" stroke="#505050" stroke-width="1"/>
<text x="11.80" y="189.10" font-size="12.8" fill="#505050" letter-spacing="0.744">A1</text>
<path d="M93,181.5 H101 L97,185.5 Z" fill="#3a3a3a"/>
<rect x="121" y="178.7" width="2" height="1.8" fill="#f4f4f4"/>
<rect x="121" y="183.1" width="2" height="1.8" fill="#f4f4f4"/>
<rect x="121" y="187.5" width="2" height="1.8" fill="#f4f4f4"/>
<rect x="137.5" y="171.5" width="109" height="25" fill="#b2b2b2" stroke="#505050" stroke-width="1"/>
<path d="M151,179 L161,189 M161,179 L151,189" fill="none" stroke="#888" stroke-width="1.6"/>
<path d="M186.5,184.5 L190.5,188.5 L198.5,179.5" fill="none" stroke="#888" stroke-width="2.3"/>
<text x="222" y="188.3" font-size="15" font-style="italic" font-weight="700" fill="#333" font-family="'Liberation Serif',serif">f</text>
<text x="227.8" y="187.8" font-size="10.5" font-style="italic" font-weight="700" fill="#333" font-family="'Liberation Serif',serif">x</text>
<rect x="250.5" y="171.5" width="1422" height="25" fill="#b2b2b2" stroke="#505050" stroke-width="1"/>
<text x="261.70" y="188.90" font-size="13.5" fill="#484848" letter-spacing="0.643">_id</text>
<path d="M1661.5,181.5 L1665,185 L1668.5,181.5" fill="none" stroke="#262626" stroke-width="1.4"/>
<path d="M22,211 V222 H10.5 Z" fill="#dedede"/>
<rect x="1659" y="207" width="17" height="753" fill="#4f4f4f"/>
<rect x="1659" y="207" width="1" height="753" fill="#5a5a5a"/>
<rect x="1662.5" y="209.5" width="14" height="13" fill="#9a9a9a" stroke="#5e5e5e" stroke-width="1"/>
<path d="M1665.5,218.5 L1669.5,213.5 L1673.5,218.5 Z" fill="#3a3a3a"/>
<rect x="1662.5" y="224.5" width="14" height="15" fill="#9a9a9a" stroke="#5e5e5e" stroke-width="1"/>
<rect x="1662.5" y="946.5" width="14" height="13" fill="#9a9a9a" stroke="#5e5e5e" stroke-width="1"/>
<path d="M1665.5,951 L1669.5,956 L1673.5,951 Z" fill="#3a3a3a"/>
<rect x="0" y="960" width="1676" height="27" fill="#666666"/>
<rect x="0" y="960" width="1676" height="1" fill="#757575"/>
<path d="M32.5,970 V977 L27.8,973.5 Z" fill="#909090"/>
<path d="M56,970 V977 L60.7,973.5 Z" fill="#909090"/>
<rect x="100.5" y="960" width="82" height="23.5" fill="#ffffff"/>
<rect x="100.5" y="983" width="82" height="1.8" fill="#217346"/>
<text x="112.50" y="977.70" font-size="12.6" fill="#217346" font-weight="700" letter-spacing="0.367">dataTotal</text>
<circle cx="224" cy="974" r="7.6" fill="none" stroke="#f2f2f2" stroke-width="1.3"/>
<path d="M219.5,974 H228.5 M224,969.5 V978.5" fill="none" stroke="#f2f2f2" stroke-width="1.6"/>
<rect x="1008" y="969" width="2" height="2" fill="#f0f0f0"/>
<rect x="1008" y="973" width="2" height="2" fill="#f0f0f0"/>
<rect x="1008" y="977" width="2" height="2" fill="#f0f0f0"/>
<rect x="1025" y="967.5" width="633.5" height="14" fill="#4f4f4f"/>
<rect x="1025.5" y="968" width="14" height="13.5" fill="#9a9a9a" stroke="#555" stroke-width="1"/>
<path d="M1034.5,970.5 L1034.5,978.5 L1030,974.5 Z" fill="#3a3a3a"/>
<rect x="1040.5" y="968" width="301" height="13.5" fill="#959595" stroke="#555" stroke-width="1"/>
<rect x="1644.5" y="968" width="14" height="13.5" fill="#9a9a9a" stroke="#555" stroke-width="1"/>
<path d="M1649.5,970.5 L1649.5,978.5 L1654,974.5 Z" fill="#3a3a3a"/>
<rect x="0" y="987" width="1676" height="1" fill="#505050"/>
<rect x="0" y="988" width="1676" height="1.3" fill="#2b2b2b"/>
<rect x="0" y="989" width="1676" height="21" fill="#bebbb8"/>
<text x="7.50" y="1003.80" font-size="11.0" fill="#262626" letter-spacing="-0.391">Prêt</text>
<path d="M52,1004.5 H47.5 V993.5 H60.5 V997 M47.5,995.5 H60.5 M49.5,997.5 H52.5 M49.5,999.5 H51.8 M49.5,1001.5 H51.5" fill="none" stroke="#262626" stroke-width="1"/>
<circle cx="56.5" cy="1001.3" r="3.9" fill="#bebbb8" stroke="#262626" stroke-width="1"/><rect x="55.2" y="1000" width="2.6" height="2.6" fill="#262626"/>
<circle cx="84.9" cy="993.9" r="1.8" fill="none" stroke="#262626" stroke-width="1"/>
<path d="M79.8,994.6 C80.3,993.6 81.3,994 82,994.6 C83.8,996.4 86.2,996.4 88,994.6 C88.7,994 89.8,993.6 90.2,994.6 C90,996 88.4,996.6 87.3,997.3 L87.6,1000.5 L88.6,1004.6 C88.3,1005.8 87.2,1005.6 86.8,1004.8 L85,1001.6 L83.2,1004.8 C82.8,1005.6 81.5,1005.8 81.3,1004.6 L82.4,1000.5 L82.7,997.3 C81.6,996.6 80,996 79.8,994.6 Z" fill="none" stroke="#262626" stroke-width="1"/>
<text x="88.40" y="1006.00" font-size="11" fill="#262626">?</text>
<text x="96.00" y="1003.80" font-size="11.7" fill="#262626" letter-spacing="-0.003">Accessibilité : non disponible</text>
<rect x="1377" y="989" width="40" height="21" fill="#9e9c9a"/>
<rect x="1390.5" y="992.5" width="13" height="12" fill="none" stroke="#1f1f1f" stroke-width="1.1"/>
<line x1="1394.5" y1="992.5" x2="1394.5" y2="1004.5" stroke="#1f1f1f" stroke-width="1"/>
<line x1="1399.5" y1="992.5" x2="1399.5" y2="1004.5" stroke="#1f1f1f" stroke-width="1"/>
<line x1="1390.5" y1="996.5" x2="1403.5" y2="996.5" stroke="#1f1f1f" stroke-width="1"/>
<line x1="1390.5" y1="1000.5" x2="1403.5" y2="1000.5" stroke="#1f1f1f" stroke-width="1"/>
<rect x="1430.5" y="992.5" width="13" height="12" fill="none" stroke="#262626" stroke-width="1"/>
<rect x="1433.5" y="995.5" width="7" height="6" fill="none" stroke="#262626" stroke-width="1"/>
<line x1="1435" y1="997.5" x2="1439" y2="997.5" stroke="#262626" stroke-width="1"/>
<line x1="1435" y1="999.5" x2="1439" y2="999.5" stroke="#262626" stroke-width="1"/>
<rect x="1470.5" y="992.5" width="13" height="12" fill="none" stroke="#262626" stroke-width="1"/>
<path d="M1470.5,999.5 H1477.5 V992.5 M1474.5,992.5 V997.5" fill="none" stroke="#262626" stroke-width="1"/>
<line x1="1503" y1="998.5" x2="1510" y2="998.5" stroke="#262626" stroke-width="1"/>
<line x1="1516" y1="998.5" x2="1616" y2="998.5" stroke="#3a3a3a" stroke-width="1"/>
<rect x="1564.5" y="993.5" width="4.5" height="11" fill="#7f7f7f"/>
<path d="M1621,998.5 H1629 M1625,994.5 V1002.5" fill="none" stroke="#262626" stroke-width="1"/>
<text x="1642.00" y="1003.30" font-size="10.9" fill="#262626" letter-spacing="-0.351">100 %</text>
</svg>
</div></body></html>
